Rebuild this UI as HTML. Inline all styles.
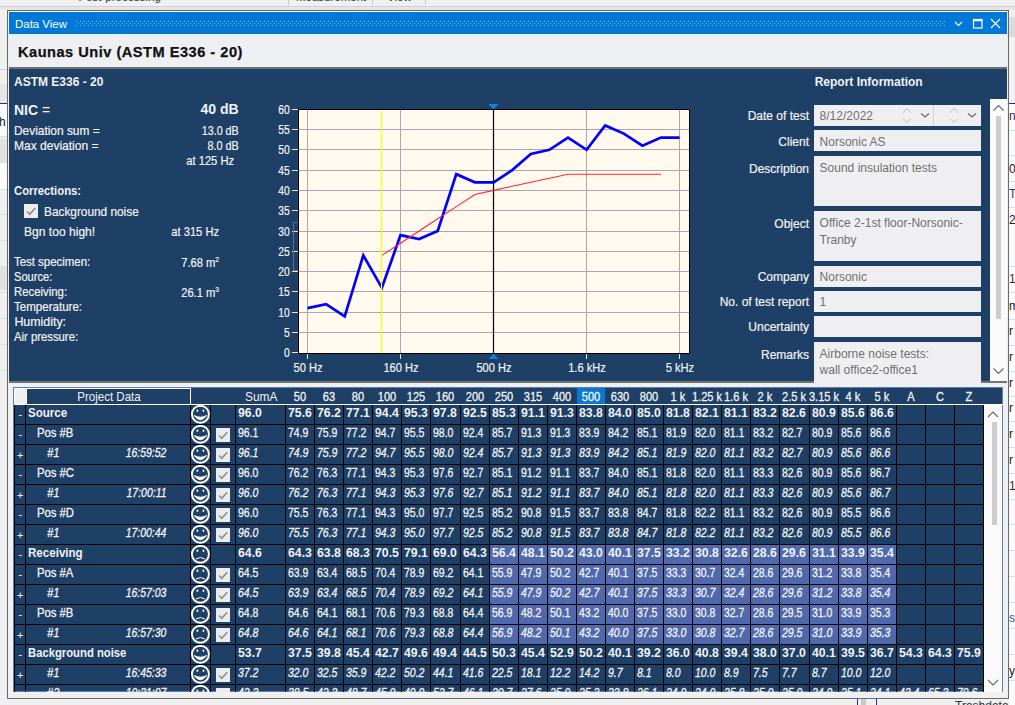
<!DOCTYPE html>
<html><head><meta charset="utf-8"><style>
html,body{margin:0;padding:0;width:1015px;height:705px;overflow:hidden;position:relative;background:#f0f0f0}
.t{position:absolute;font-family:'Liberation Sans',sans-serif;white-space:pre;line-height:1}
</style></head><body>
<div style="position:absolute;left:0px;top:0px;width:1015px;height:705px;background:#f0f0f0;"></div><div class="t" style="left:78.5px;top:-7.69px;font-size:11.5px;font-weight:normal;font-style:normal;color:#333;">Post-processing</div><div class="t" style="left:296px;top:-7.69px;font-size:11.5px;font-weight:normal;font-style:normal;color:#333;">Measurement</div><div class="t" style="left:387px;top:-7.69px;font-size:11.5px;font-weight:normal;font-style:normal;color:#333;">View</div><div style="position:absolute;left:288px;top:0px;width:1px;height:5px;background:#c8c8c8;"></div><div style="position:absolute;left:372px;top:0px;width:1px;height:5px;background:#c8c8c8;"></div><div style="position:absolute;left:425px;top:0px;width:1px;height:5px;background:#c8c8c8;"></div><div style="position:absolute;left:0px;top:6px;width:1015px;height:1px;background:#d2d2d2;"></div><div style="position:absolute;left:0px;top:7px;width:1015px;height:3px;background:#e6e6e6;"></div><div style="position:absolute;left:0px;top:69px;width:7px;height:1px;background:#d0d0d0;"></div><div style="position:absolute;left:0px;top:84px;width:7px;height:19px;background:#e6e6e6;"></div><div style="position:absolute;left:0px;top:103px;width:7px;height:1px;background:#2a2aa0;"></div><div style="position:absolute;left:0px;top:104px;width:7px;height:33px;background:#fbfbfb;"></div><div class="t" style="left:-1px;top:115.68px;font-size:12px;font-weight:normal;font-style:normal;color:#222;">h</div><div style="position:absolute;left:0px;top:136px;width:7px;height:1px;background:#cfe3f3;"></div><div style="position:absolute;left:0px;top:139px;width:7px;height:23px;background:#e2e2e2;"></div><div style="position:absolute;left:0px;top:162px;width:7px;height:1px;background:#cfe3f3;"></div><div style="position:absolute;left:0px;top:189px;width:7px;height:1px;background:#cfe3f3;"></div><div style="position:absolute;left:0px;top:214px;width:7px;height:1px;background:#cfe3f3;"></div><div style="position:absolute;left:0px;top:240px;width:7px;height:1px;background:#cfe3f3;"></div><div style="position:absolute;left:0px;top:266px;width:7px;height:1px;background:#cfe3f3;"></div><div style="position:absolute;left:0px;top:292px;width:7px;height:1px;background:#cfe3f3;"></div><div style="position:absolute;left:0px;top:318px;width:7px;height:1px;background:#cfe3f3;"></div><div style="position:absolute;left:0px;top:344px;width:7px;height:1px;background:#cfe3f3;"></div><div style="position:absolute;left:0px;top:370px;width:7px;height:1px;background:#cfe3f3;"></div><div style="position:absolute;left:0px;top:163px;width:7px;height:26px;background:#fbfbfb;"></div><div style="position:absolute;left:0px;top:267px;width:7px;height:23px;background:#e2e2e2;"></div><div style="position:absolute;left:1009px;top:17px;width:6px;height:20px;background:#dcdcdc;"></div><div style="position:absolute;left:1009px;top:37px;width:6px;height:66px;background:#f2f2f2;"></div><div style="position:absolute;left:1009px;top:103px;width:6px;height:1px;background:#2a2aa0;"></div><div style="position:absolute;left:1009px;top:104px;width:6px;height:601px;background:#fbfbfb;"></div><div style="position:absolute;left:1009px;top:130px;width:6px;height:1px;background:#cfe3f3;"></div><div style="position:absolute;left:1009px;top:155px;width:6px;height:1px;background:#cfe3f3;"></div><div style="position:absolute;left:1009px;top:181px;width:6px;height:1px;background:#cfe3f3;"></div><div style="position:absolute;left:1009px;top:207px;width:6px;height:1px;background:#cfe3f3;"></div><div style="position:absolute;left:1009px;top:266px;width:6px;height:1px;background:#cfe3f3;"></div><div style="position:absolute;left:1009px;top:292px;width:6px;height:1px;background:#cfe3f3;"></div><div style="position:absolute;left:1009px;top:319px;width:6px;height:1px;background:#cfe3f3;"></div><div style="position:absolute;left:1009px;top:345px;width:6px;height:1px;background:#cfe3f3;"></div><div style="position:absolute;left:1009px;top:371px;width:6px;height:1px;background:#cfe3f3;"></div><div style="position:absolute;left:1009px;top:396px;width:6px;height:1px;background:#cfe3f3;"></div><div style="position:absolute;left:1009px;top:421px;width:6px;height:1px;background:#cfe3f3;"></div><div style="position:absolute;left:1009px;top:447px;width:6px;height:1px;background:#cfe3f3;"></div><div style="position:absolute;left:1009px;top:473px;width:6px;height:1px;background:#cfe3f3;"></div><div style="position:absolute;left:1009px;top:499px;width:6px;height:1px;background:#cfe3f3;"></div><div style="position:absolute;left:1009px;top:524px;width:6px;height:1px;background:#cfe3f3;"></div><div style="position:absolute;left:1009px;top:550px;width:6px;height:1px;background:#cfe3f3;"></div><div style="position:absolute;left:1009px;top:576px;width:6px;height:1px;background:#cfe3f3;"></div><div style="position:absolute;left:1009px;top:602px;width:6px;height:1px;background:#cfe3f3;"></div><div style="position:absolute;left:1009px;top:628px;width:6px;height:1px;background:#cfe3f3;"></div><div style="position:absolute;left:1009px;top:654px;width:6px;height:1px;background:#cfe3f3;"></div><div style="position:absolute;left:1009px;top:680px;width:6px;height:1px;background:#cfe3f3;"></div><div class="t" style="left:1009px;top:109.68px;font-size:12px;font-weight:normal;font-style:normal;color:#3a2a4a;">ne</div><div class="t" style="left:1009px;top:162.68px;font-size:12px;font-weight:normal;font-style:normal;color:#222;">02</div><div class="t" style="left:1009px;top:187.68px;font-size:12px;font-weight:normal;font-style:normal;color:#1a3a8a;">T1</div><div class="t" style="left:1009px;top:213.68px;font-size:12px;font-weight:normal;font-style:normal;color:#222;">2</div><div class="t" style="left:1009px;top:272.68px;font-size:12px;font-weight:normal;font-style:normal;color:#3a2a4a;">19</div><div class="t" style="left:1009px;top:299.68px;font-size:12px;font-weight:normal;font-style:normal;color:#222;">m</div><div class="t" style="left:1009px;top:324.68px;font-size:12px;font-weight:normal;font-style:normal;color:#222;">r</div><div class="t" style="left:1009px;top:350.68px;font-size:12px;font-weight:normal;font-style:normal;color:#222;">r</div><div class="t" style="left:1009px;top:376.68px;font-size:12px;font-weight:normal;font-style:normal;color:#222;">r</div><div class="t" style="left:1009px;top:401.68px;font-size:12px;font-weight:normal;font-style:normal;color:#222;">r</div><div class="t" style="left:1009px;top:427.68px;font-size:12px;font-weight:normal;font-style:normal;color:#222;">r</div><div class="t" style="left:1009px;top:453.68px;font-size:12px;font-weight:normal;font-style:normal;color:#222;">r</div><div class="t" style="left:1009px;top:479.68px;font-size:12px;font-weight:normal;font-style:normal;color:#3a2a4a;">19</div><div class="t" style="left:1009px;top:611.68px;font-size:12px;font-weight:normal;font-style:normal;color:#1a5ab0;">s</div><div class="t" style="left:1009px;top:664.68px;font-size:12px;font-weight:normal;font-style:normal;color:#222;">y</div><div style="position:absolute;left:857px;top:698px;width:1px;height:7px;background:#2a2aa0;"></div><div style="position:absolute;left:861px;top:698px;width:5px;height:7px;background:#c8c8c8;"></div><div style="position:absolute;left:876px;top:698px;width:1px;height:7px;background:#2a2aa0;"></div><div class="t" style="left:955px;top:699.68px;font-size:12px;font-weight:normal;font-style:normal;color:#333;">Trashdata</div><div style="position:absolute;left:7px;top:10px;width:1002px;height:689px;background:#f0f0f0;box-sizing:border-box;border:1px solid #6a6a6a;"></div><div style="position:absolute;left:8px;top:11px;width:1000px;height:1px;background:#ffffff;"></div><div style="position:absolute;left:9px;top:12px;width:998px;height:22px;background:#0078d7;"></div><div class="t" style="left:15px;top:18.95px;font-size:11.8px;font-weight:normal;font-style:normal;color:#ffffff;transform:scaleX(0.97);transform-origin:left;">Data View</div><svg style="position:absolute;left:76px;top:20px" width="870" height="7"><defs><pattern id="dp" width="4" height="4" patternUnits="userSpaceOnUse"><rect x="0" y="1" width="1" height="1" fill="#7cbcf0"/><rect x="2" y="3" width="1" height="1" fill="#7cbcf0"/></pattern></defs><rect width="870" height="6" fill="url(#dp)"/></svg><svg style="position:absolute;left:950px;top:14px" width="58" height="18" fill="none" stroke="#fff" stroke-width="1.2"><path d="M5 8 L8.5 11.5 L12 8"/><rect x="23.5" y="5.5" width="8.5" height="8.5"/><line x1="23" y1="6.5" x2="32.5" y2="6.5" stroke-width="1.5"/><path d="M41 5 L50 14 M50 5 L41 14"/></svg><div style="position:absolute;left:9px;top:34px;width:998px;height:33px;background:#eeeff2;"></div><div class="t" style="left:18px;top:44.84px;font-size:14.6px;font-weight:bold;font-style:normal;color:#111;letter-spacing:0.5px;-webkit-text-stroke:0.25px #111">Kaunas Univ (ASTM E336 - 20)</div><div style="position:absolute;left:9px;top:67px;width:998px;height:2px;background:#6d6d6d;"></div><div style="position:absolute;left:9px;top:69px;width:998px;height:312px;background:#1e3f66;"></div><div style="position:absolute;left:9px;top:381px;width:998px;height:2px;background:#6f7474;"></div><div class="t" style="left:14px;top:76.08px;font-size:12px;font-weight:bold;font-style:normal;color:#f2f2f2;">ASTM E336 - 20</div><div class="t" style="left:14px;top:103.16px;font-size:14px;font-weight:bold;font-style:normal;color:#f2f2f2;">NIC <span style="font-weight:normal">=</span></div><div class="t" style="right:776.4px;top:102.36px;font-size:14px;font-weight:bold;font-style:normal;color:#f2f2f2;">40 dB</div><div class="t" style="left:14.3px;top:125.04px;font-size:12.4px;font-weight:normal;font-style:normal;color:#f2f2f2;-webkit-text-stroke:0.2px #f2f2f2;transform:scaleX(0.96);transform-origin:left;">Deviation sum =</div><div class="t" style="right:776.2px;top:125.04px;font-size:12.4px;font-weight:normal;font-style:normal;color:#f2f2f2;-webkit-text-stroke:0.2px #f2f2f2;transform:scaleX(0.865);transform-origin:right;">13.0 dB</div><div class="t" style="left:14.3px;top:140.14px;font-size:12.4px;font-weight:normal;font-style:normal;color:#f2f2f2;-webkit-text-stroke:0.2px #f2f2f2;transform:scaleX(0.97);transform-origin:left;">Max deviation =</div><div class="t" style="right:776.2px;top:140.14px;font-size:12.4px;font-weight:normal;font-style:normal;color:#f2f2f2;-webkit-text-stroke:0.2px #f2f2f2;transform:scaleX(0.875);transform-origin:right;">8.0 dB</div><div class="t" style="right:780.7px;top:155.04px;font-size:12.4px;font-weight:normal;font-style:normal;color:#f2f2f2;-webkit-text-stroke:0.2px #f2f2f2;transform:scaleX(0.9);transform-origin:right;">at 125 Hz</div><div class="t" style="left:14.4px;top:185.48px;font-size:12px;font-weight:bold;font-style:normal;color:#f2f2f2;transform:scaleX(0.94);transform-origin:left;">Corrections:</div><div style="position:absolute;left:24px;top:204px;width:14px;height:14px;background:#ededed;"></div><svg style="position:absolute;left:24px;top:204px" width="14" height="14"><path d="M3 7.5 L5.8 10.3 L11.2 4" fill="none" stroke="#8a8a8a" stroke-width="1.6"/></svg><div class="t" style="left:44.4px;top:206.34px;font-size:12.4px;font-weight:normal;font-style:normal;color:#f2f2f2;-webkit-text-stroke:0.2px #f2f2f2;transform:scaleX(0.955);transform-origin:left;">Background noise</div><div class="t" style="left:24.3px;top:226.14px;font-size:12.4px;font-weight:normal;font-style:normal;color:#f2f2f2;-webkit-text-stroke:0.2px #f2f2f2;transform:scaleX(0.975);transform-origin:left;">Bgn too high!</div><div class="t" style="right:796px;top:226.14px;font-size:12.4px;font-weight:normal;font-style:normal;color:#f2f2f2;-webkit-text-stroke:0.2px #f2f2f2;transform:scaleX(0.9);transform-origin:right;">at 315 Hz</div><div class="t" style="left:14.4px;top:256.14px;font-size:12.4px;font-weight:normal;font-style:normal;color:#f2f2f2;-webkit-text-stroke:0.2px #f2f2f2;transform:scaleX(0.922);transform-origin:left;">Test specimen:</div><div class="t" style="right:796px;top:256.14px;font-size:12.4px;font-weight:normal;font-style:normal;color:#f2f2f2;-webkit-text-stroke:0.2px #f2f2f2;transform:scaleX(0.9);transform-origin:right;">7.68 m<sup style="font-size:7.5px;vertical-align:5px">2</sup></div><div class="t" style="left:14.4px;top:271.14px;font-size:12.4px;font-weight:normal;font-style:normal;color:#f2f2f2;-webkit-text-stroke:0.2px #f2f2f2;transform:scaleX(0.895);transform-origin:left;">Source:</div><div class="t" style="left:14.4px;top:286.14px;font-size:12.4px;font-weight:normal;font-style:normal;color:#f2f2f2;-webkit-text-stroke:0.2px #f2f2f2;transform:scaleX(0.918);transform-origin:left;">Receiving:</div><div class="t" style="right:796px;top:286.14px;font-size:12.4px;font-weight:normal;font-style:normal;color:#f2f2f2;-webkit-text-stroke:0.2px #f2f2f2;transform:scaleX(0.9);transform-origin:right;">26.1 m<sup style="font-size:7.5px;vertical-align:5px">3</sup></div><div class="t" style="left:14.4px;top:301.14px;font-size:12.4px;font-weight:normal;font-style:normal;color:#f2f2f2;-webkit-text-stroke:0.2px #f2f2f2;transform:scaleX(0.932);transform-origin:left;">Temperature:</div><div class="t" style="left:14.4px;top:316.14px;font-size:12.4px;font-weight:normal;font-style:normal;color:#f2f2f2;-webkit-text-stroke:0.2px #f2f2f2;">Humidity:</div><div class="t" style="left:14.4px;top:331.14px;font-size:12.4px;font-weight:normal;font-style:normal;color:#f2f2f2;-webkit-text-stroke:0.2px #f2f2f2;transform:scaleX(0.912);transform-origin:left;">Air pressure:</div><svg style="position:absolute;left:0;top:0" width="1015" height="705"><rect x="298" y="109" width="392" height="245" fill="#000"/><rect x="299" y="110" width="390" height="243" fill="#fff9ee"/><line x1="299" y1="332.5" x2="689" y2="332.5" stroke="#a9a6ae" stroke-width="1"/><line x1="299" y1="312.5" x2="689" y2="312.5" stroke="#a9a6ae" stroke-width="1"/><line x1="299" y1="291.5" x2="689" y2="291.5" stroke="#a9a6ae" stroke-width="1"/><line x1="299" y1="271.5" x2="689" y2="271.5" stroke="#a9a6ae" stroke-width="1"/><line x1="299" y1="251.5" x2="689" y2="251.5" stroke="#a9a6ae" stroke-width="1"/><line x1="299" y1="231.5" x2="689" y2="231.5" stroke="#a9a6ae" stroke-width="1"/><line x1="299" y1="210.5" x2="689" y2="210.5" stroke="#a9a6ae" stroke-width="1"/><line x1="299" y1="190.5" x2="689" y2="190.5" stroke="#a9a6ae" stroke-width="1"/><line x1="299" y1="170.5" x2="689" y2="170.5" stroke="#a9a6ae" stroke-width="1"/><line x1="299" y1="149.5" x2="689" y2="149.5" stroke="#a9a6ae" stroke-width="1"/><line x1="299" y1="129.5" x2="689" y2="129.5" stroke="#a9a6ae" stroke-width="1"/><line x1="307.5" y1="110" x2="307.5" y2="353" stroke="#a9a6ae" stroke-width="1"/><line x1="400.5" y1="110" x2="400.5" y2="353" stroke="#a9a6ae" stroke-width="1"/><line x1="586.5" y1="110" x2="586.5" y2="353" stroke="#a9a6ae" stroke-width="1"/><line x1="679.5" y1="110" x2="679.5" y2="353" stroke="#a9a6ae" stroke-width="1"/><line x1="292" y1="352.5" x2="298" y2="352.5" stroke="#e8e8e8" stroke-width="1"/><line x1="292" y1="332.5" x2="298" y2="332.5" stroke="#e8e8e8" stroke-width="1"/><line x1="292" y1="312.5" x2="298" y2="312.5" stroke="#e8e8e8" stroke-width="1"/><line x1="292" y1="291.5" x2="298" y2="291.5" stroke="#e8e8e8" stroke-width="1"/><line x1="292" y1="271.5" x2="298" y2="271.5" stroke="#e8e8e8" stroke-width="1"/><line x1="292" y1="251.5" x2="298" y2="251.5" stroke="#e8e8e8" stroke-width="1"/><line x1="292" y1="231.5" x2="298" y2="231.5" stroke="#e8e8e8" stroke-width="1"/><line x1="292" y1="210.5" x2="298" y2="210.5" stroke="#e8e8e8" stroke-width="1"/><line x1="292" y1="190.5" x2="298" y2="190.5" stroke="#e8e8e8" stroke-width="1"/><line x1="292" y1="170.5" x2="298" y2="170.5" stroke="#e8e8e8" stroke-width="1"/><line x1="292" y1="149.5" x2="298" y2="149.5" stroke="#e8e8e8" stroke-width="1"/><line x1="292" y1="129.5" x2="298" y2="129.5" stroke="#e8e8e8" stroke-width="1"/><line x1="292" y1="109.5" x2="298" y2="109.5" stroke="#e8e8e8" stroke-width="1"/><line x1="307.5" y1="354" x2="307.5" y2="359" stroke="#e8e8e8" stroke-width="1"/><line x1="400.5" y1="354" x2="400.5" y2="359" stroke="#e8e8e8" stroke-width="1"/><line x1="493.5" y1="354" x2="493.5" y2="359" stroke="#e8e8e8" stroke-width="1"/><line x1="586.5" y1="354" x2="586.5" y2="359" stroke="#e8e8e8" stroke-width="1"/><line x1="679.5" y1="354" x2="679.5" y2="359" stroke="#e8e8e8" stroke-width="1"/><polyline fill="none" stroke="#0000ff" stroke-width="2.7" stroke-linejoin="miter" points="307.5,308.1 326.1,304.1 344.7,316.3 363.3,255.4 381.9,287.8 400.5,235.1 419.1,239.1 437.7,231.0 456.3,174.2 474.9,182.3 493.6,182.3 512.2,170.1 530.8,153.9 549.4,149.8 568.0,137.6 586.6,149.8 605.2,125.4 623.8,133.6 642.4,145.7 661.0,137.6 679.6,137.6"/><polyline fill="none" stroke="#ff2a2a" stroke-width="1.1" points="381.9,255.4 400.5,243.2 419.1,231.0 437.7,218.8 456.3,206.6 474.9,194.5 493.6,190.4 512.2,186.3 530.8,182.3 549.4,178.2 568.0,174.2 586.6,174.2 605.2,174.2 623.8,174.2 642.4,174.2 661.0,174.2"/><line x1="381.5" y1="110" x2="381.5" y2="353" stroke="#ffff00" stroke-width="1.2"/><line x1="493.5" y1="110" x2="493.5" y2="353" stroke="#000" stroke-width="1.2"/><path d="M488.5 104 L498.5 104 L493.5 109.5 Z" fill="#0a84e0"/><path d="M488.5 359 L498.5 359 L493.5 353.5 Z" fill="#0a84e0"/></svg><div class="t" style="right:725px;top:347.22px;font-size:12.3px;font-weight:normal;font-style:normal;color:#f2f2f2;-webkit-text-stroke:0.2px #f2f2f2;transform:scaleX(0.84);transform-origin:right;">0</div><div class="t" style="right:725px;top:327.22px;font-size:12.3px;font-weight:normal;font-style:normal;color:#f2f2f2;-webkit-text-stroke:0.2px #f2f2f2;transform:scaleX(0.84);transform-origin:right;">5</div><div class="t" style="right:725px;top:307.22px;font-size:12.3px;font-weight:normal;font-style:normal;color:#f2f2f2;-webkit-text-stroke:0.2px #f2f2f2;transform:scaleX(0.84);transform-origin:right;">10</div><div class="t" style="right:725px;top:286.22px;font-size:12.3px;font-weight:normal;font-style:normal;color:#f2f2f2;-webkit-text-stroke:0.2px #f2f2f2;transform:scaleX(0.84);transform-origin:right;">15</div><div class="t" style="right:725px;top:266.22px;font-size:12.3px;font-weight:normal;font-style:normal;color:#f2f2f2;-webkit-text-stroke:0.2px #f2f2f2;transform:scaleX(0.84);transform-origin:right;">20</div><div class="t" style="right:725px;top:246.22px;font-size:12.3px;font-weight:normal;font-style:normal;color:#f2f2f2;-webkit-text-stroke:0.2px #f2f2f2;transform:scaleX(0.84);transform-origin:right;">25</div><div class="t" style="right:725px;top:226.22px;font-size:12.3px;font-weight:normal;font-style:normal;color:#f2f2f2;-webkit-text-stroke:0.2px #f2f2f2;transform:scaleX(0.84);transform-origin:right;">30</div><div class="t" style="right:725px;top:205.22px;font-size:12.3px;font-weight:normal;font-style:normal;color:#f2f2f2;-webkit-text-stroke:0.2px #f2f2f2;transform:scaleX(0.84);transform-origin:right;">35</div><div class="t" style="right:725px;top:185.22px;font-size:12.3px;font-weight:normal;font-style:normal;color:#f2f2f2;-webkit-text-stroke:0.2px #f2f2f2;transform:scaleX(0.84);transform-origin:right;">40</div><div class="t" style="right:725px;top:165.22px;font-size:12.3px;font-weight:normal;font-style:normal;color:#f2f2f2;-webkit-text-stroke:0.2px #f2f2f2;transform:scaleX(0.84);transform-origin:right;">45</div><div class="t" style="right:725px;top:144.22px;font-size:12.3px;font-weight:normal;font-style:normal;color:#f2f2f2;-webkit-text-stroke:0.2px #f2f2f2;transform:scaleX(0.84);transform-origin:right;">50</div><div class="t" style="right:725px;top:124.22px;font-size:12.3px;font-weight:normal;font-style:normal;color:#f2f2f2;-webkit-text-stroke:0.2px #f2f2f2;transform:scaleX(0.84);transform-origin:right;">55</div><div class="t" style="right:725px;top:104.22px;font-size:12.3px;font-weight:normal;font-style:normal;color:#f2f2f2;-webkit-text-stroke:0.2px #f2f2f2;transform:scaleX(0.84);transform-origin:right;">60</div><div class="t" style="left:107.5px;width:400px;text-align:center;top:361.94px;font-size:12.4px;font-weight:normal;font-style:normal;color:#f2f2f2;-webkit-text-stroke:0.2px #f2f2f2;transform:scaleX(0.895);transform-origin:center;">50 Hz</div><div class="t" style="left:200.52499999999998px;width:400px;text-align:center;top:361.94px;font-size:12.4px;font-weight:normal;font-style:normal;color:#f2f2f2;-webkit-text-stroke:0.2px #f2f2f2;transform:scaleX(0.895);transform-origin:center;">160 Hz</div><div class="t" style="left:293.55px;width:400px;text-align:center;top:361.94px;font-size:12.4px;font-weight:normal;font-style:normal;color:#f2f2f2;-webkit-text-stroke:0.2px #f2f2f2;transform:scaleX(0.895);transform-origin:center;">500 Hz</div><div class="t" style="left:386.57500000000005px;width:400px;text-align:center;top:361.94px;font-size:12.4px;font-weight:normal;font-style:normal;color:#f2f2f2;-webkit-text-stroke:0.2px #f2f2f2;transform:scaleX(0.895);transform-origin:center;">1.6 kHz</div><div class="t" style="left:479.6px;width:400px;text-align:center;top:361.94px;font-size:12.4px;font-weight:normal;font-style:normal;color:#f2f2f2;-webkit-text-stroke:0.2px #f2f2f2;transform:scaleX(0.895);transform-origin:center;">5 kHz</div><div style="position:absolute;left:293px;top:222px;width:5px;height:49px;background:transparent;box-sizing:border-box;border:1px solid #56708f;border-right:none"></div><div class="t" style="left:814.7px;top:76.08px;font-size:12px;font-weight:bold;font-style:normal;color:#f2f2f2;">Report Information</div><div class="t" style="right:206px;top:110.38px;font-size:12px;font-weight:normal;font-style:normal;color:#f2f2f2;-webkit-text-stroke:0.2px #f2f2f2;">Date of test</div><div style="position:absolute;left:814px;top:105px;width:167px;height:21px;background:#efeff2;"></div><div class="t" style="right:206px;top:135.58px;font-size:12px;font-weight:normal;font-style:normal;color:#f2f2f2;-webkit-text-stroke:0.2px #f2f2f2;">Client</div><div style="position:absolute;left:814px;top:130px;width:167px;height:21px;background:#efeff2;"></div><div class="t" style="right:206px;top:163.48px;font-size:12px;font-weight:normal;font-style:normal;color:#f2f2f2;-webkit-text-stroke:0.2px #f2f2f2;">Description</div><div style="position:absolute;left:814px;top:156px;width:167px;height:50px;background:#efeff2;"></div><div class="t" style="right:206px;top:218.18px;font-size:12px;font-weight:normal;font-style:normal;color:#f2f2f2;-webkit-text-stroke:0.2px #f2f2f2;">Object</div><div style="position:absolute;left:814px;top:211px;width:167px;height:50px;background:#efeff2;"></div><div class="t" style="right:206px;top:271.28px;font-size:12px;font-weight:normal;font-style:normal;color:#f2f2f2;-webkit-text-stroke:0.2px #f2f2f2;">Company</div><div style="position:absolute;left:814px;top:266px;width:167px;height:21px;background:#efeff2;"></div><div class="t" style="right:206px;top:296.28px;font-size:12px;font-weight:normal;font-style:normal;color:#f2f2f2;-webkit-text-stroke:0.2px #f2f2f2;">No. of test report</div><div style="position:absolute;left:814px;top:291px;width:167px;height:21px;background:#efeff2;"></div><div class="t" style="right:206px;top:321.18px;font-size:12px;font-weight:normal;font-style:normal;color:#f2f2f2;-webkit-text-stroke:0.2px #f2f2f2;">Uncertainty</div><div style="position:absolute;left:814px;top:316px;width:167px;height:21px;background:#efeff2;"></div><div class="t" style="right:206px;top:349.38px;font-size:12px;font-weight:normal;font-style:normal;color:#f2f2f2;-webkit-text-stroke:0.2px #f2f2f2;">Remarks</div><div style="position:absolute;left:814px;top:342px;width:167px;height:50px;background:#efeff2;"></div><div class="t" style="left:819.6px;top:110.38px;font-size:12px;font-weight:normal;font-style:normal;color:#707070;">8/12/2022</div><div style="position:absolute;left:933px;top:105px;width:1px;height:21px;background:#cfcfd4;"></div><svg style="position:absolute;left:814px;top:105px" width="167" height="21" fill="none" stroke="#b9b9bd" stroke-width="1"><path d="M89 7.5 L93 3.5 L97 7.5 M89 13.5 L93 17.5 L97 13.5"/><path d="M136 7.5 L140 3.5 L144 7.5 M136 13.5 L140 17.5 L144 13.5"/><path d="M107 8.5 L111 12 L115 8.5 M154 8.5 L158 12 L162 8.5" stroke="#6a6a6a" stroke-width="1.3"/></svg><div class="t" style="left:819.6px;top:135.58px;font-size:12px;font-weight:normal;font-style:normal;color:#707070;">Norsonic AS</div><div class="t" style="left:819.6px;top:162.48px;font-size:12px;font-weight:normal;font-style:normal;color:#707070;">Sound insulation tests</div><div class="t" style="left:819.6px;top:217.48px;font-size:12px;font-weight:normal;font-style:normal;color:#707070;">Office 2-1st floor-Norsonic-</div><div class="t" style="left:819.6px;top:233.68px;font-size:12px;font-weight:normal;font-style:normal;color:#707070;">Tranby</div><div class="t" style="left:819.6px;top:271.28px;font-size:12px;font-weight:normal;font-style:normal;color:#707070;">Norsonic</div><div class="t" style="left:819.6px;top:296.28px;font-size:12px;font-weight:normal;font-style:normal;color:#707070;">1</div><div class="t" style="left:819.6px;top:348.18px;font-size:12px;font-weight:normal;font-style:normal;color:#707070;">Airborne noise tests:</div><div class="t" style="left:819.6px;top:364.38px;font-size:12px;font-weight:normal;font-style:normal;color:#707070;">wall office2-office1</div><div style="position:absolute;left:990px;top:99px;width:17px;height:282px;background:#fafafa;"></div><div style="position:absolute;left:996px;top:116px;width:5px;height:203px;background:#cdcdcd;"></div><svg style="position:absolute;left:990px;top:99px" width="17" height="282" fill="none" stroke="#6a6a6a" stroke-width="1.2"><path d="M3.5 11.5 L8.5 6.5 L13.5 11.5"/><path d="M3.5 269.5 L8.5 274.5 L13.5 269.5"/></svg>
<div style="position:absolute;left:13px;top:387px;width:990px;height:305px;overflow:hidden;background:#1e3f66;box-shadow:inset 0 0 0 1px #5b7fae"><div style="position:absolute;left:1.00px;top:1.00px;width:13.00px;height:17.00px;background:#ffffff;"></div><div style="position:absolute;left:2.00px;top:2.00px;width:11.00px;height:15.00px;background:#efefef;"></div><div style="position:absolute;left:13.00px;top:1.00px;width:165.00px;height:17.00px;background:#1e3f66;box-sizing:border-box;border:1px solid #ffffff;"></div><div class="t" style="left:-4.00px;width:200px;text-align:center;top:4.67px;font-size:11.9px;font-weight:normal;font-style:normal;color:#f2f2f2;transform:scaleX(0.97);transform-origin:center;">Project Data</div><div style="position:absolute;left:564.00px;top:1.00px;width:28.00px;height:16.00px;background:#0b78d0;"></div><div class="t" style="right:725.80px;top:3.82px;font-size:12.3px;font-weight:normal;font-style:normal;color:#f2f2f2;transform:scaleX(0.97);transform-origin:right;">SumA</div><div class="t" style="left:186.50px;width:200px;text-align:center;top:3.82px;font-size:12.3px;font-weight:normal;font-style:normal;color:#f2f2f2;transform:scaleX(0.9);transform-origin:center;-webkit-text-stroke:0.3px #f2f2f2;">50</div><div class="t" style="left:215.50px;width:200px;text-align:center;top:3.82px;font-size:12.3px;font-weight:normal;font-style:normal;color:#f2f2f2;transform:scaleX(0.9);transform-origin:center;-webkit-text-stroke:0.3px #f2f2f2;">63</div><div class="t" style="left:244.50px;width:200px;text-align:center;top:3.82px;font-size:12.3px;font-weight:normal;font-style:normal;color:#f2f2f2;transform:scaleX(0.9);transform-origin:center;-webkit-text-stroke:0.3px #f2f2f2;">80</div><div class="t" style="left:273.50px;width:200px;text-align:center;top:3.82px;font-size:12.3px;font-weight:normal;font-style:normal;color:#f2f2f2;transform:scaleX(0.9);transform-origin:center;-webkit-text-stroke:0.3px #f2f2f2;">100</div><div class="t" style="left:302.50px;width:200px;text-align:center;top:3.82px;font-size:12.3px;font-weight:normal;font-style:normal;color:#f2f2f2;transform:scaleX(0.9);transform-origin:center;-webkit-text-stroke:0.3px #f2f2f2;">125</div><div class="t" style="left:332.00px;width:200px;text-align:center;top:3.82px;font-size:12.3px;font-weight:normal;font-style:normal;color:#f2f2f2;transform:scaleX(0.9);transform-origin:center;-webkit-text-stroke:0.3px #f2f2f2;">160</div><div class="t" style="left:361.50px;width:200px;text-align:center;top:3.82px;font-size:12.3px;font-weight:normal;font-style:normal;color:#f2f2f2;transform:scaleX(0.9);transform-origin:center;-webkit-text-stroke:0.3px #f2f2f2;">200</div><div class="t" style="left:390.50px;width:200px;text-align:center;top:3.82px;font-size:12.3px;font-weight:normal;font-style:normal;color:#f2f2f2;transform:scaleX(0.9);transform-origin:center;-webkit-text-stroke:0.3px #f2f2f2;">250</div><div class="t" style="left:419.50px;width:200px;text-align:center;top:3.82px;font-size:12.3px;font-weight:normal;font-style:normal;color:#f2f2f2;transform:scaleX(0.9);transform-origin:center;-webkit-text-stroke:0.3px #f2f2f2;">315</div><div class="t" style="left:448.50px;width:200px;text-align:center;top:3.82px;font-size:12.3px;font-weight:normal;font-style:normal;color:#f2f2f2;transform:scaleX(0.9);transform-origin:center;-webkit-text-stroke:0.3px #f2f2f2;">400</div><div class="t" style="left:477.50px;width:200px;text-align:center;top:3.82px;font-size:12.3px;font-weight:normal;font-style:normal;color:#f2f2f2;transform:scaleX(0.9);transform-origin:center;-webkit-text-stroke:0.3px #f2f2f2;">500</div><div class="t" style="left:506.50px;width:200px;text-align:center;top:3.82px;font-size:12.3px;font-weight:normal;font-style:normal;color:#f2f2f2;transform:scaleX(0.9);transform-origin:center;-webkit-text-stroke:0.3px #f2f2f2;">630</div><div class="t" style="left:535.50px;width:200px;text-align:center;top:3.82px;font-size:12.3px;font-weight:normal;font-style:normal;color:#f2f2f2;transform:scaleX(0.9);transform-origin:center;-webkit-text-stroke:0.3px #f2f2f2;">800</div><div class="t" style="left:564.50px;width:200px;text-align:center;top:3.82px;font-size:12.3px;font-weight:normal;font-style:normal;color:#f2f2f2;transform:scaleX(0.9);transform-origin:center;-webkit-text-stroke:0.3px #f2f2f2;">1 k</div><div class="t" style="left:593.50px;width:200px;text-align:center;top:3.82px;font-size:12.3px;font-weight:normal;font-style:normal;color:#f2f2f2;transform:scaleX(0.9);transform-origin:center;-webkit-text-stroke:0.3px #f2f2f2;">1.25 k</div><div class="t" style="left:622.50px;width:200px;text-align:center;top:3.82px;font-size:12.3px;font-weight:normal;font-style:normal;color:#f2f2f2;transform:scaleX(0.9);transform-origin:center;-webkit-text-stroke:0.3px #f2f2f2;">1.6 k</div><div class="t" style="left:651.50px;width:200px;text-align:center;top:3.82px;font-size:12.3px;font-weight:normal;font-style:normal;color:#f2f2f2;transform:scaleX(0.9);transform-origin:center;-webkit-text-stroke:0.3px #f2f2f2;">2 k</div><div class="t" style="left:681.00px;width:200px;text-align:center;top:3.82px;font-size:12.3px;font-weight:normal;font-style:normal;color:#f2f2f2;transform:scaleX(0.9);transform-origin:center;-webkit-text-stroke:0.3px #f2f2f2;">2.5 k</div><div class="t" style="left:710.50px;width:200px;text-align:center;top:3.82px;font-size:12.3px;font-weight:normal;font-style:normal;color:#f2f2f2;transform:scaleX(0.9);transform-origin:center;-webkit-text-stroke:0.3px #f2f2f2;">3.15 k</div><div class="t" style="left:739.50px;width:200px;text-align:center;top:3.82px;font-size:12.3px;font-weight:normal;font-style:normal;color:#f2f2f2;transform:scaleX(0.9);transform-origin:center;-webkit-text-stroke:0.3px #f2f2f2;">4 k</div><div class="t" style="left:768.50px;width:200px;text-align:center;top:3.82px;font-size:12.3px;font-weight:normal;font-style:normal;color:#f2f2f2;transform:scaleX(0.9);transform-origin:center;-webkit-text-stroke:0.3px #f2f2f2;">5 k</div><div class="t" style="left:797.50px;width:200px;text-align:center;top:3.82px;font-size:12.3px;font-weight:normal;font-style:normal;color:#f2f2f2;transform:scaleX(0.9);transform-origin:center;-webkit-text-stroke:0.3px #f2f2f2;">A</div><div class="t" style="left:826.50px;width:200px;text-align:center;top:3.82px;font-size:12.3px;font-weight:normal;font-style:normal;color:#f2f2f2;transform:scaleX(0.9);transform-origin:center;-webkit-text-stroke:0.3px #f2f2f2;">C</div><div class="t" style="left:855.50px;width:200px;text-align:center;top:3.82px;font-size:12.3px;font-weight:normal;font-style:normal;color:#f2f2f2;transform:scaleX(0.9);transform-origin:center;-webkit-text-stroke:0.3px #f2f2f2;">Z</div><div style="position:absolute;left:1.00px;top:17.00px;width:989.00px;height:1.00px;background:#ffffff;"></div><div style="position:absolute;left:476.00px;top:157.00px;width:29.00px;height:20.00px;background:#5068ac;"></div><div style="position:absolute;left:505.00px;top:157.00px;width:29.00px;height:20.00px;background:#5068ac;"></div><div style="position:absolute;left:534.00px;top:157.00px;width:29.00px;height:20.00px;background:#5068ac;"></div><div style="position:absolute;left:563.00px;top:157.00px;width:29.00px;height:20.00px;background:#5068ac;"></div><div style="position:absolute;left:592.00px;top:157.00px;width:29.00px;height:20.00px;background:#5068ac;"></div><div style="position:absolute;left:621.00px;top:157.00px;width:29.00px;height:20.00px;background:#5068ac;"></div><div style="position:absolute;left:650.00px;top:157.00px;width:29.00px;height:20.00px;background:#5068ac;"></div><div style="position:absolute;left:679.00px;top:157.00px;width:29.00px;height:20.00px;background:#5068ac;"></div><div style="position:absolute;left:708.00px;top:157.00px;width:29.00px;height:20.00px;background:#5068ac;"></div><div style="position:absolute;left:737.00px;top:157.00px;width:29.00px;height:20.00px;background:#5068ac;"></div><div style="position:absolute;left:766.00px;top:157.00px;width:30.00px;height:20.00px;background:#5068ac;"></div><div style="position:absolute;left:796.00px;top:157.00px;width:29.00px;height:20.00px;background:#5068ac;"></div><div style="position:absolute;left:825.00px;top:157.00px;width:29.00px;height:20.00px;background:#5068ac;"></div><div style="position:absolute;left:854.00px;top:157.00px;width:29.00px;height:20.00px;background:#5068ac;"></div><div style="position:absolute;left:476.00px;top:177.00px;width:29.00px;height:20.00px;background:#5068ac;"></div><div style="position:absolute;left:505.00px;top:177.00px;width:29.00px;height:20.00px;background:#5068ac;"></div><div style="position:absolute;left:534.00px;top:177.00px;width:29.00px;height:20.00px;background:#5068ac;"></div><div style="position:absolute;left:563.00px;top:177.00px;width:29.00px;height:20.00px;background:#5068ac;"></div><div style="position:absolute;left:592.00px;top:177.00px;width:29.00px;height:20.00px;background:#5068ac;"></div><div style="position:absolute;left:621.00px;top:177.00px;width:29.00px;height:20.00px;background:#5068ac;"></div><div style="position:absolute;left:650.00px;top:177.00px;width:29.00px;height:20.00px;background:#5068ac;"></div><div style="position:absolute;left:679.00px;top:177.00px;width:29.00px;height:20.00px;background:#5068ac;"></div><div style="position:absolute;left:708.00px;top:177.00px;width:29.00px;height:20.00px;background:#5068ac;"></div><div style="position:absolute;left:737.00px;top:177.00px;width:29.00px;height:20.00px;background:#5068ac;"></div><div style="position:absolute;left:766.00px;top:177.00px;width:30.00px;height:20.00px;background:#5068ac;"></div><div style="position:absolute;left:796.00px;top:177.00px;width:29.00px;height:20.00px;background:#5068ac;"></div><div style="position:absolute;left:825.00px;top:177.00px;width:29.00px;height:20.00px;background:#5068ac;"></div><div style="position:absolute;left:854.00px;top:177.00px;width:29.00px;height:20.00px;background:#5068ac;"></div><div style="position:absolute;left:476.00px;top:197.00px;width:29.00px;height:20.00px;background:#5068ac;"></div><div style="position:absolute;left:505.00px;top:197.00px;width:29.00px;height:20.00px;background:#5068ac;"></div><div style="position:absolute;left:534.00px;top:197.00px;width:29.00px;height:20.00px;background:#5068ac;"></div><div style="position:absolute;left:563.00px;top:197.00px;width:29.00px;height:20.00px;background:#5068ac;"></div><div style="position:absolute;left:592.00px;top:197.00px;width:29.00px;height:20.00px;background:#5068ac;"></div><div style="position:absolute;left:621.00px;top:197.00px;width:29.00px;height:20.00px;background:#5068ac;"></div><div style="position:absolute;left:650.00px;top:197.00px;width:29.00px;height:20.00px;background:#5068ac;"></div><div style="position:absolute;left:679.00px;top:197.00px;width:29.00px;height:20.00px;background:#5068ac;"></div><div style="position:absolute;left:708.00px;top:197.00px;width:29.00px;height:20.00px;background:#5068ac;"></div><div style="position:absolute;left:737.00px;top:197.00px;width:29.00px;height:20.00px;background:#5068ac;"></div><div style="position:absolute;left:766.00px;top:197.00px;width:30.00px;height:20.00px;background:#5068ac;"></div><div style="position:absolute;left:796.00px;top:197.00px;width:29.00px;height:20.00px;background:#5068ac;"></div><div style="position:absolute;left:825.00px;top:197.00px;width:29.00px;height:20.00px;background:#5068ac;"></div><div style="position:absolute;left:854.00px;top:197.00px;width:29.00px;height:20.00px;background:#5068ac;"></div><div style="position:absolute;left:476.00px;top:217.00px;width:29.00px;height:20.00px;background:#5068ac;"></div><div style="position:absolute;left:505.00px;top:217.00px;width:29.00px;height:20.00px;background:#5068ac;"></div><div style="position:absolute;left:534.00px;top:217.00px;width:29.00px;height:20.00px;background:#5068ac;"></div><div style="position:absolute;left:563.00px;top:217.00px;width:29.00px;height:20.00px;background:#5068ac;"></div><div style="position:absolute;left:592.00px;top:217.00px;width:29.00px;height:20.00px;background:#5068ac;"></div><div style="position:absolute;left:621.00px;top:217.00px;width:29.00px;height:20.00px;background:#5068ac;"></div><div style="position:absolute;left:650.00px;top:217.00px;width:29.00px;height:20.00px;background:#5068ac;"></div><div style="position:absolute;left:679.00px;top:217.00px;width:29.00px;height:20.00px;background:#5068ac;"></div><div style="position:absolute;left:708.00px;top:217.00px;width:29.00px;height:20.00px;background:#5068ac;"></div><div style="position:absolute;left:737.00px;top:217.00px;width:29.00px;height:20.00px;background:#5068ac;"></div><div style="position:absolute;left:766.00px;top:217.00px;width:30.00px;height:20.00px;background:#5068ac;"></div><div style="position:absolute;left:796.00px;top:217.00px;width:29.00px;height:20.00px;background:#5068ac;"></div><div style="position:absolute;left:825.00px;top:217.00px;width:29.00px;height:20.00px;background:#5068ac;"></div><div style="position:absolute;left:854.00px;top:217.00px;width:29.00px;height:20.00px;background:#5068ac;"></div><div style="position:absolute;left:476.00px;top:237.00px;width:29.00px;height:20.00px;background:#5068ac;"></div><div style="position:absolute;left:505.00px;top:237.00px;width:29.00px;height:20.00px;background:#5068ac;"></div><div style="position:absolute;left:534.00px;top:237.00px;width:29.00px;height:20.00px;background:#5068ac;"></div><div style="position:absolute;left:563.00px;top:237.00px;width:29.00px;height:20.00px;background:#5068ac;"></div><div style="position:absolute;left:592.00px;top:237.00px;width:29.00px;height:20.00px;background:#5068ac;"></div><div style="position:absolute;left:621.00px;top:237.00px;width:29.00px;height:20.00px;background:#5068ac;"></div><div style="position:absolute;left:650.00px;top:237.00px;width:29.00px;height:20.00px;background:#5068ac;"></div><div style="position:absolute;left:679.00px;top:237.00px;width:29.00px;height:20.00px;background:#5068ac;"></div><div style="position:absolute;left:708.00px;top:237.00px;width:29.00px;height:20.00px;background:#5068ac;"></div><div style="position:absolute;left:737.00px;top:237.00px;width:29.00px;height:20.00px;background:#5068ac;"></div><div style="position:absolute;left:766.00px;top:237.00px;width:30.00px;height:20.00px;background:#5068ac;"></div><div style="position:absolute;left:796.00px;top:237.00px;width:29.00px;height:20.00px;background:#5068ac;"></div><div style="position:absolute;left:825.00px;top:237.00px;width:29.00px;height:20.00px;background:#5068ac;"></div><div style="position:absolute;left:854.00px;top:237.00px;width:29.00px;height:20.00px;background:#5068ac;"></div><div class="t" style="left:-92.70px;width:200px;text-align:center;top:21.74px;font-size:11px;font-weight:normal;font-style:normal;color:#f2f2f2;">-</div><div class="t" style="left:14.90px;top:20.31px;font-size:12.2px;font-weight:bold;font-style:normal;color:#f2f2f2;transform:scaleX(0.95);transform-origin:left;">Source</div><div class="t" style="left:224.90px;top:20.05px;font-size:12.5px;font-weight:bold;font-style:normal;color:#f2f2f2;transform:scaleX(0.98);transform-origin:left;">96.0</div><div class="t" style="left:275.10px;top:20.05px;font-size:12.5px;font-weight:bold;font-style:normal;color:#f2f2f2;transform:scaleX(0.98);transform-origin:left;">75.6</div><div class="t" style="left:304.10px;top:20.05px;font-size:12.5px;font-weight:bold;font-style:normal;color:#f2f2f2;transform:scaleX(0.98);transform-origin:left;">76.2</div><div class="t" style="left:333.10px;top:20.05px;font-size:12.5px;font-weight:bold;font-style:normal;color:#f2f2f2;transform:scaleX(0.98);transform-origin:left;">77.1</div><div class="t" style="left:362.10px;top:20.05px;font-size:12.5px;font-weight:bold;font-style:normal;color:#f2f2f2;transform:scaleX(0.98);transform-origin:left;">94.4</div><div class="t" style="left:391.10px;top:20.05px;font-size:12.5px;font-weight:bold;font-style:normal;color:#f2f2f2;transform:scaleX(0.98);transform-origin:left;">95.3</div><div class="t" style="left:420.10px;top:20.05px;font-size:12.5px;font-weight:bold;font-style:normal;color:#f2f2f2;transform:scaleX(0.98);transform-origin:left;">97.8</div><div class="t" style="left:450.10px;top:20.05px;font-size:12.5px;font-weight:bold;font-style:normal;color:#f2f2f2;transform:scaleX(0.98);transform-origin:left;">92.5</div><div class="t" style="left:479.10px;top:20.05px;font-size:12.5px;font-weight:bold;font-style:normal;color:#f2f2f2;transform:scaleX(0.98);transform-origin:left;">85.3</div><div class="t" style="left:508.10px;top:20.05px;font-size:12.5px;font-weight:bold;font-style:normal;color:#f2f2f2;transform:scaleX(0.98);transform-origin:left;">91.1</div><div class="t" style="left:537.10px;top:20.05px;font-size:12.5px;font-weight:bold;font-style:normal;color:#f2f2f2;transform:scaleX(0.98);transform-origin:left;">91.3</div><div class="t" style="left:566.10px;top:20.05px;font-size:12.5px;font-weight:bold;font-style:normal;color:#f2f2f2;transform:scaleX(0.98);transform-origin:left;">83.8</div><div class="t" style="left:595.10px;top:20.05px;font-size:12.5px;font-weight:bold;font-style:normal;color:#f2f2f2;transform:scaleX(0.98);transform-origin:left;">84.0</div><div class="t" style="left:624.10px;top:20.05px;font-size:12.5px;font-weight:bold;font-style:normal;color:#f2f2f2;transform:scaleX(0.98);transform-origin:left;">85.0</div><div class="t" style="left:653.10px;top:20.05px;font-size:12.5px;font-weight:bold;font-style:normal;color:#f2f2f2;transform:scaleX(0.98);transform-origin:left;">81.8</div><div class="t" style="left:682.10px;top:20.05px;font-size:12.5px;font-weight:bold;font-style:normal;color:#f2f2f2;transform:scaleX(0.98);transform-origin:left;">82.1</div><div class="t" style="left:711.10px;top:20.05px;font-size:12.5px;font-weight:bold;font-style:normal;color:#f2f2f2;transform:scaleX(0.98);transform-origin:left;">81.1</div><div class="t" style="left:740.10px;top:20.05px;font-size:12.5px;font-weight:bold;font-style:normal;color:#f2f2f2;transform:scaleX(0.98);transform-origin:left;">83.2</div><div class="t" style="left:769.10px;top:20.05px;font-size:12.5px;font-weight:bold;font-style:normal;color:#f2f2f2;transform:scaleX(0.98);transform-origin:left;">82.6</div><div class="t" style="left:799.10px;top:20.05px;font-size:12.5px;font-weight:bold;font-style:normal;color:#f2f2f2;transform:scaleX(0.98);transform-origin:left;">80.9</div><div class="t" style="left:828.10px;top:20.05px;font-size:12.5px;font-weight:bold;font-style:normal;color:#f2f2f2;transform:scaleX(0.98);transform-origin:left;">85.6</div><div class="t" style="left:857.10px;top:20.05px;font-size:12.5px;font-weight:bold;font-style:normal;color:#f2f2f2;transform:scaleX(0.98);transform-origin:left;">86.6</div><svg style="position:absolute;left:0;top:0;overflow:visible" width="1" height="1"><g transform="translate(-13,-387)"><circle cx="200.4" cy="414.2" r="8.5" fill="none" stroke="#fff" stroke-width="1.9"/><ellipse cx="197.4" cy="410.8" rx="0.9" ry="1.2" fill="#fff"/><ellipse cx="203.4" cy="410.8" rx="0.9" ry="1.2" fill="#fff"/><path d="M194.1 415.5 Q200.4 424.0 206.7 415.5 Q200.4 418.8 194.1 415.5 Z" fill="#fff" stroke="#fff" stroke-width="0.9" stroke-linejoin="round"/></g></svg><div class="t" style="left:-92.70px;width:200px;text-align:center;top:41.74px;font-size:11px;font-weight:normal;font-style:normal;color:#f2f2f2;">-</div><div class="t" style="left:24.40px;top:40.31px;font-size:12.2px;font-weight:normal;font-style:normal;color:#f2f2f2;transform:scaleX(0.925);transform-origin:left;-webkit-text-stroke:0.3px #f2f2f2;">Pos #B</div><div class="t" style="left:224.90px;top:40.05px;font-size:12.5px;font-weight:normal;font-style:normal;color:#f2f2f2;transform:scaleX(0.84);transform-origin:left;-webkit-text-stroke:0.3px #f2f2f2;">96.1</div><div class="t" style="left:275.10px;top:40.05px;font-size:12.5px;font-weight:normal;font-style:normal;color:#f2f2f2;transform:scaleX(0.84);transform-origin:left;-webkit-text-stroke:0.3px #f2f2f2;">74.9</div><div class="t" style="left:304.10px;top:40.05px;font-size:12.5px;font-weight:normal;font-style:normal;color:#f2f2f2;transform:scaleX(0.84);transform-origin:left;-webkit-text-stroke:0.3px #f2f2f2;">75.9</div><div class="t" style="left:333.10px;top:40.05px;font-size:12.5px;font-weight:normal;font-style:normal;color:#f2f2f2;transform:scaleX(0.84);transform-origin:left;-webkit-text-stroke:0.3px #f2f2f2;">77.2</div><div class="t" style="left:362.10px;top:40.05px;font-size:12.5px;font-weight:normal;font-style:normal;color:#f2f2f2;transform:scaleX(0.84);transform-origin:left;-webkit-text-stroke:0.3px #f2f2f2;">94.7</div><div class="t" style="left:391.10px;top:40.05px;font-size:12.5px;font-weight:normal;font-style:normal;color:#f2f2f2;transform:scaleX(0.84);transform-origin:left;-webkit-text-stroke:0.3px #f2f2f2;">95.5</div><div class="t" style="left:420.10px;top:40.05px;font-size:12.5px;font-weight:normal;font-style:normal;color:#f2f2f2;transform:scaleX(0.84);transform-origin:left;-webkit-text-stroke:0.3px #f2f2f2;">98.0</div><div class="t" style="left:450.10px;top:40.05px;font-size:12.5px;font-weight:normal;font-style:normal;color:#f2f2f2;transform:scaleX(0.84);transform-origin:left;-webkit-text-stroke:0.3px #f2f2f2;">92.4</div><div class="t" style="left:479.10px;top:40.05px;font-size:12.5px;font-weight:normal;font-style:normal;color:#f2f2f2;transform:scaleX(0.84);transform-origin:left;-webkit-text-stroke:0.3px #f2f2f2;">85.7</div><div class="t" style="left:508.10px;top:40.05px;font-size:12.5px;font-weight:normal;font-style:normal;color:#f2f2f2;transform:scaleX(0.84);transform-origin:left;-webkit-text-stroke:0.3px #f2f2f2;">91.3</div><div class="t" style="left:537.10px;top:40.05px;font-size:12.5px;font-weight:normal;font-style:normal;color:#f2f2f2;transform:scaleX(0.84);transform-origin:left;-webkit-text-stroke:0.3px #f2f2f2;">91.3</div><div class="t" style="left:566.10px;top:40.05px;font-size:12.5px;font-weight:normal;font-style:normal;color:#f2f2f2;transform:scaleX(0.84);transform-origin:left;-webkit-text-stroke:0.3px #f2f2f2;">83.9</div><div class="t" style="left:595.10px;top:40.05px;font-size:12.5px;font-weight:normal;font-style:normal;color:#f2f2f2;transform:scaleX(0.84);transform-origin:left;-webkit-text-stroke:0.3px #f2f2f2;">84.2</div><div class="t" style="left:624.10px;top:40.05px;font-size:12.5px;font-weight:normal;font-style:normal;color:#f2f2f2;transform:scaleX(0.84);transform-origin:left;-webkit-text-stroke:0.3px #f2f2f2;">85.1</div><div class="t" style="left:653.10px;top:40.05px;font-size:12.5px;font-weight:normal;font-style:normal;color:#f2f2f2;transform:scaleX(0.84);transform-origin:left;-webkit-text-stroke:0.3px #f2f2f2;">81.9</div><div class="t" style="left:682.10px;top:40.05px;font-size:12.5px;font-weight:normal;font-style:normal;color:#f2f2f2;transform:scaleX(0.84);transform-origin:left;-webkit-text-stroke:0.3px #f2f2f2;">82.0</div><div class="t" style="left:711.10px;top:40.05px;font-size:12.5px;font-weight:normal;font-style:normal;color:#f2f2f2;transform:scaleX(0.84);transform-origin:left;-webkit-text-stroke:0.3px #f2f2f2;">81.1</div><div class="t" style="left:740.10px;top:40.05px;font-size:12.5px;font-weight:normal;font-style:normal;color:#f2f2f2;transform:scaleX(0.84);transform-origin:left;-webkit-text-stroke:0.3px #f2f2f2;">83.2</div><div class="t" style="left:769.10px;top:40.05px;font-size:12.5px;font-weight:normal;font-style:normal;color:#f2f2f2;transform:scaleX(0.84);transform-origin:left;-webkit-text-stroke:0.3px #f2f2f2;">82.7</div><div class="t" style="left:799.10px;top:40.05px;font-size:12.5px;font-weight:normal;font-style:normal;color:#f2f2f2;transform:scaleX(0.84);transform-origin:left;-webkit-text-stroke:0.3px #f2f2f2;">80.9</div><div class="t" style="left:828.10px;top:40.05px;font-size:12.5px;font-weight:normal;font-style:normal;color:#f2f2f2;transform:scaleX(0.84);transform-origin:left;-webkit-text-stroke:0.3px #f2f2f2;">85.6</div><div class="t" style="left:857.10px;top:40.05px;font-size:12.5px;font-weight:normal;font-style:normal;color:#f2f2f2;transform:scaleX(0.84);transform-origin:left;-webkit-text-stroke:0.3px #f2f2f2;">86.6</div><svg style="position:absolute;left:0;top:0;overflow:visible" width="1" height="1"><g transform="translate(-13,-387)"><circle cx="200.4" cy="434.2" r="8.5" fill="none" stroke="#fff" stroke-width="1.9"/><ellipse cx="197.4" cy="430.8" rx="0.9" ry="1.2" fill="#fff"/><ellipse cx="203.4" cy="430.8" rx="0.9" ry="1.2" fill="#fff"/><path d="M194.1 435.5 Q200.4 444.0 206.7 435.5 Q200.4 438.8 194.1 435.5 Z" fill="#fff" stroke="#fff" stroke-width="0.9" stroke-linejoin="round"/></g></svg><div style="position:absolute;left:203.00px;top:41.10px;width:14.00px;height:13.70px;background:#ececec;"></div><svg style="position:absolute;left:203px;top:41.10px" width="14" height="14"><path d="M3 7.5 L5.8 10.3 L11.2 4.2" fill="none" stroke="#8c8c8c" stroke-width="1.7"/></svg><div class="t" style="left:-92.70px;width:200px;text-align:center;top:62.54px;font-size:11px;font-weight:normal;font-style:normal;color:#f2f2f2;">+</div><div class="t" style="left:33.50px;top:60.31px;font-size:12.2px;font-weight:normal;font-style:italic;color:#f2f2f2;transform:scaleX(0.92);transform-origin:left;-webkit-text-stroke:0.3px #f2f2f2;">#1</div><div class="t" style="right:836.80px;top:60.31px;font-size:12.2px;font-weight:normal;font-style:italic;color:#f2f2f2;transform:scaleX(0.86);transform-origin:right;-webkit-text-stroke:0.3px #f2f2f2;">16:59:52</div><div class="t" style="left:224.90px;top:60.05px;font-size:12.5px;font-weight:normal;font-style:italic;color:#f2f2f2;transform:scaleX(0.84);transform-origin:left;-webkit-text-stroke:0.3px #f2f2f2;">96.1</div><div class="t" style="left:275.10px;top:60.05px;font-size:12.5px;font-weight:normal;font-style:italic;color:#f2f2f2;transform:scaleX(0.84);transform-origin:left;-webkit-text-stroke:0.3px #f2f2f2;">74.9</div><div class="t" style="left:304.10px;top:60.05px;font-size:12.5px;font-weight:normal;font-style:italic;color:#f2f2f2;transform:scaleX(0.84);transform-origin:left;-webkit-text-stroke:0.3px #f2f2f2;">75.9</div><div class="t" style="left:333.10px;top:60.05px;font-size:12.5px;font-weight:normal;font-style:italic;color:#f2f2f2;transform:scaleX(0.84);transform-origin:left;-webkit-text-stroke:0.3px #f2f2f2;">77.2</div><div class="t" style="left:362.10px;top:60.05px;font-size:12.5px;font-weight:normal;font-style:italic;color:#f2f2f2;transform:scaleX(0.84);transform-origin:left;-webkit-text-stroke:0.3px #f2f2f2;">94.7</div><div class="t" style="left:391.10px;top:60.05px;font-size:12.5px;font-weight:normal;font-style:italic;color:#f2f2f2;transform:scaleX(0.84);transform-origin:left;-webkit-text-stroke:0.3px #f2f2f2;">95.5</div><div class="t" style="left:420.10px;top:60.05px;font-size:12.5px;font-weight:normal;font-style:italic;color:#f2f2f2;transform:scaleX(0.84);transform-origin:left;-webkit-text-stroke:0.3px #f2f2f2;">98.0</div><div class="t" style="left:450.10px;top:60.05px;font-size:12.5px;font-weight:normal;font-style:italic;color:#f2f2f2;transform:scaleX(0.84);transform-origin:left;-webkit-text-stroke:0.3px #f2f2f2;">92.4</div><div class="t" style="left:479.10px;top:60.05px;font-size:12.5px;font-weight:normal;font-style:italic;color:#f2f2f2;transform:scaleX(0.84);transform-origin:left;-webkit-text-stroke:0.3px #f2f2f2;">85.7</div><div class="t" style="left:508.10px;top:60.05px;font-size:12.5px;font-weight:normal;font-style:italic;color:#f2f2f2;transform:scaleX(0.84);transform-origin:left;-webkit-text-stroke:0.3px #f2f2f2;">91.3</div><div class="t" style="left:537.10px;top:60.05px;font-size:12.5px;font-weight:normal;font-style:italic;color:#f2f2f2;transform:scaleX(0.84);transform-origin:left;-webkit-text-stroke:0.3px #f2f2f2;">91.3</div><div class="t" style="left:566.10px;top:60.05px;font-size:12.5px;font-weight:normal;font-style:italic;color:#f2f2f2;transform:scaleX(0.84);transform-origin:left;-webkit-text-stroke:0.3px #f2f2f2;">83.9</div><div class="t" style="left:595.10px;top:60.05px;font-size:12.5px;font-weight:normal;font-style:italic;color:#f2f2f2;transform:scaleX(0.84);transform-origin:left;-webkit-text-stroke:0.3px #f2f2f2;">84.2</div><div class="t" style="left:624.10px;top:60.05px;font-size:12.5px;font-weight:normal;font-style:italic;color:#f2f2f2;transform:scaleX(0.84);transform-origin:left;-webkit-text-stroke:0.3px #f2f2f2;">85.1</div><div class="t" style="left:653.10px;top:60.05px;font-size:12.5px;font-weight:normal;font-style:italic;color:#f2f2f2;transform:scaleX(0.84);transform-origin:left;-webkit-text-stroke:0.3px #f2f2f2;">81.9</div><div class="t" style="left:682.10px;top:60.05px;font-size:12.5px;font-weight:normal;font-style:italic;color:#f2f2f2;transform:scaleX(0.84);transform-origin:left;-webkit-text-stroke:0.3px #f2f2f2;">82.0</div><div class="t" style="left:711.10px;top:60.05px;font-size:12.5px;font-weight:normal;font-style:italic;color:#f2f2f2;transform:scaleX(0.84);transform-origin:left;-webkit-text-stroke:0.3px #f2f2f2;">81.1</div><div class="t" style="left:740.10px;top:60.05px;font-size:12.5px;font-weight:normal;font-style:italic;color:#f2f2f2;transform:scaleX(0.84);transform-origin:left;-webkit-text-stroke:0.3px #f2f2f2;">83.2</div><div class="t" style="left:769.10px;top:60.05px;font-size:12.5px;font-weight:normal;font-style:italic;color:#f2f2f2;transform:scaleX(0.84);transform-origin:left;-webkit-text-stroke:0.3px #f2f2f2;">82.7</div><div class="t" style="left:799.10px;top:60.05px;font-size:12.5px;font-weight:normal;font-style:italic;color:#f2f2f2;transform:scaleX(0.84);transform-origin:left;-webkit-text-stroke:0.3px #f2f2f2;">80.9</div><div class="t" style="left:828.10px;top:60.05px;font-size:12.5px;font-weight:normal;font-style:italic;color:#f2f2f2;transform:scaleX(0.84);transform-origin:left;-webkit-text-stroke:0.3px #f2f2f2;">85.6</div><div class="t" style="left:857.10px;top:60.05px;font-size:12.5px;font-weight:normal;font-style:italic;color:#f2f2f2;transform:scaleX(0.84);transform-origin:left;-webkit-text-stroke:0.3px #f2f2f2;">86.6</div><svg style="position:absolute;left:0;top:0;overflow:visible" width="1" height="1"><g transform="translate(-13,-387)"><circle cx="200.4" cy="454.2" r="8.5" fill="none" stroke="#fff" stroke-width="1.9"/><ellipse cx="197.4" cy="450.8" rx="0.9" ry="1.2" fill="#fff"/><ellipse cx="203.4" cy="450.8" rx="0.9" ry="1.2" fill="#fff"/><path d="M194.1 455.5 Q200.4 464.0 206.7 455.5 Q200.4 458.8 194.1 455.5 Z" fill="#fff" stroke="#fff" stroke-width="0.9" stroke-linejoin="round"/></g></svg><div style="position:absolute;left:203.00px;top:61.10px;width:14.00px;height:13.70px;background:#ececec;"></div><svg style="position:absolute;left:203px;top:61.10px" width="14" height="14"><path d="M3 7.5 L5.8 10.3 L11.2 4.2" fill="none" stroke="#8c8c8c" stroke-width="1.7"/></svg><div class="t" style="left:-92.70px;width:200px;text-align:center;top:81.74px;font-size:11px;font-weight:normal;font-style:normal;color:#f2f2f2;">-</div><div class="t" style="left:24.40px;top:80.31px;font-size:12.2px;font-weight:normal;font-style:normal;color:#f2f2f2;transform:scaleX(0.925);transform-origin:left;-webkit-text-stroke:0.3px #f2f2f2;">Pos #C</div><div class="t" style="left:224.90px;top:80.05px;font-size:12.5px;font-weight:normal;font-style:normal;color:#f2f2f2;transform:scaleX(0.84);transform-origin:left;-webkit-text-stroke:0.3px #f2f2f2;">96.0</div><div class="t" style="left:275.10px;top:80.05px;font-size:12.5px;font-weight:normal;font-style:normal;color:#f2f2f2;transform:scaleX(0.84);transform-origin:left;-webkit-text-stroke:0.3px #f2f2f2;">76.2</div><div class="t" style="left:304.10px;top:80.05px;font-size:12.5px;font-weight:normal;font-style:normal;color:#f2f2f2;transform:scaleX(0.84);transform-origin:left;-webkit-text-stroke:0.3px #f2f2f2;">76.3</div><div class="t" style="left:333.10px;top:80.05px;font-size:12.5px;font-weight:normal;font-style:normal;color:#f2f2f2;transform:scaleX(0.84);transform-origin:left;-webkit-text-stroke:0.3px #f2f2f2;">77.1</div><div class="t" style="left:362.10px;top:80.05px;font-size:12.5px;font-weight:normal;font-style:normal;color:#f2f2f2;transform:scaleX(0.84);transform-origin:left;-webkit-text-stroke:0.3px #f2f2f2;">94.3</div><div class="t" style="left:391.10px;top:80.05px;font-size:12.5px;font-weight:normal;font-style:normal;color:#f2f2f2;transform:scaleX(0.84);transform-origin:left;-webkit-text-stroke:0.3px #f2f2f2;">95.3</div><div class="t" style="left:420.10px;top:80.05px;font-size:12.5px;font-weight:normal;font-style:normal;color:#f2f2f2;transform:scaleX(0.84);transform-origin:left;-webkit-text-stroke:0.3px #f2f2f2;">97.6</div><div class="t" style="left:450.10px;top:80.05px;font-size:12.5px;font-weight:normal;font-style:normal;color:#f2f2f2;transform:scaleX(0.84);transform-origin:left;-webkit-text-stroke:0.3px #f2f2f2;">92.7</div><div class="t" style="left:479.10px;top:80.05px;font-size:12.5px;font-weight:normal;font-style:normal;color:#f2f2f2;transform:scaleX(0.84);transform-origin:left;-webkit-text-stroke:0.3px #f2f2f2;">85.1</div><div class="t" style="left:508.10px;top:80.05px;font-size:12.5px;font-weight:normal;font-style:normal;color:#f2f2f2;transform:scaleX(0.84);transform-origin:left;-webkit-text-stroke:0.3px #f2f2f2;">91.2</div><div class="t" style="left:537.10px;top:80.05px;font-size:12.5px;font-weight:normal;font-style:normal;color:#f2f2f2;transform:scaleX(0.84);transform-origin:left;-webkit-text-stroke:0.3px #f2f2f2;">91.1</div><div class="t" style="left:566.10px;top:80.05px;font-size:12.5px;font-weight:normal;font-style:normal;color:#f2f2f2;transform:scaleX(0.84);transform-origin:left;-webkit-text-stroke:0.3px #f2f2f2;">83.7</div><div class="t" style="left:595.10px;top:80.05px;font-size:12.5px;font-weight:normal;font-style:normal;color:#f2f2f2;transform:scaleX(0.84);transform-origin:left;-webkit-text-stroke:0.3px #f2f2f2;">84.0</div><div class="t" style="left:624.10px;top:80.05px;font-size:12.5px;font-weight:normal;font-style:normal;color:#f2f2f2;transform:scaleX(0.84);transform-origin:left;-webkit-text-stroke:0.3px #f2f2f2;">85.1</div><div class="t" style="left:653.10px;top:80.05px;font-size:12.5px;font-weight:normal;font-style:normal;color:#f2f2f2;transform:scaleX(0.84);transform-origin:left;-webkit-text-stroke:0.3px #f2f2f2;">81.8</div><div class="t" style="left:682.10px;top:80.05px;font-size:12.5px;font-weight:normal;font-style:normal;color:#f2f2f2;transform:scaleX(0.84);transform-origin:left;-webkit-text-stroke:0.3px #f2f2f2;">82.0</div><div class="t" style="left:711.10px;top:80.05px;font-size:12.5px;font-weight:normal;font-style:normal;color:#f2f2f2;transform:scaleX(0.84);transform-origin:left;-webkit-text-stroke:0.3px #f2f2f2;">81.1</div><div class="t" style="left:740.10px;top:80.05px;font-size:12.5px;font-weight:normal;font-style:normal;color:#f2f2f2;transform:scaleX(0.84);transform-origin:left;-webkit-text-stroke:0.3px #f2f2f2;">83.3</div><div class="t" style="left:769.10px;top:80.05px;font-size:12.5px;font-weight:normal;font-style:normal;color:#f2f2f2;transform:scaleX(0.84);transform-origin:left;-webkit-text-stroke:0.3px #f2f2f2;">82.6</div><div class="t" style="left:799.10px;top:80.05px;font-size:12.5px;font-weight:normal;font-style:normal;color:#f2f2f2;transform:scaleX(0.84);transform-origin:left;-webkit-text-stroke:0.3px #f2f2f2;">80.9</div><div class="t" style="left:828.10px;top:80.05px;font-size:12.5px;font-weight:normal;font-style:normal;color:#f2f2f2;transform:scaleX(0.84);transform-origin:left;-webkit-text-stroke:0.3px #f2f2f2;">85.6</div><div class="t" style="left:857.10px;top:80.05px;font-size:12.5px;font-weight:normal;font-style:normal;color:#f2f2f2;transform:scaleX(0.84);transform-origin:left;-webkit-text-stroke:0.3px #f2f2f2;">86.7</div><svg style="position:absolute;left:0;top:0;overflow:visible" width="1" height="1"><g transform="translate(-13,-387)"><circle cx="200.4" cy="474.2" r="8.5" fill="none" stroke="#fff" stroke-width="1.9"/><ellipse cx="197.4" cy="470.8" rx="0.9" ry="1.2" fill="#fff"/><ellipse cx="203.4" cy="470.8" rx="0.9" ry="1.2" fill="#fff"/><path d="M194.1 475.5 Q200.4 484.0 206.7 475.5 Q200.4 478.8 194.1 475.5 Z" fill="#fff" stroke="#fff" stroke-width="0.9" stroke-linejoin="round"/></g></svg><div style="position:absolute;left:203.00px;top:81.10px;width:14.00px;height:13.70px;background:#ececec;"></div><svg style="position:absolute;left:203px;top:81.10px" width="14" height="14"><path d="M3 7.5 L5.8 10.3 L11.2 4.2" fill="none" stroke="#8c8c8c" stroke-width="1.7"/></svg><div class="t" style="left:-92.70px;width:200px;text-align:center;top:102.54px;font-size:11px;font-weight:normal;font-style:normal;color:#f2f2f2;">+</div><div class="t" style="left:33.50px;top:100.31px;font-size:12.2px;font-weight:normal;font-style:italic;color:#f2f2f2;transform:scaleX(0.92);transform-origin:left;-webkit-text-stroke:0.3px #f2f2f2;">#1</div><div class="t" style="right:836.80px;top:100.31px;font-size:12.2px;font-weight:normal;font-style:italic;color:#f2f2f2;transform:scaleX(0.86);transform-origin:right;-webkit-text-stroke:0.3px #f2f2f2;">17:00:11</div><div class="t" style="left:224.90px;top:100.05px;font-size:12.5px;font-weight:normal;font-style:italic;color:#f2f2f2;transform:scaleX(0.84);transform-origin:left;-webkit-text-stroke:0.3px #f2f2f2;">96.0</div><div class="t" style="left:275.10px;top:100.05px;font-size:12.5px;font-weight:normal;font-style:italic;color:#f2f2f2;transform:scaleX(0.84);transform-origin:left;-webkit-text-stroke:0.3px #f2f2f2;">76.2</div><div class="t" style="left:304.10px;top:100.05px;font-size:12.5px;font-weight:normal;font-style:italic;color:#f2f2f2;transform:scaleX(0.84);transform-origin:left;-webkit-text-stroke:0.3px #f2f2f2;">76.3</div><div class="t" style="left:333.10px;top:100.05px;font-size:12.5px;font-weight:normal;font-style:italic;color:#f2f2f2;transform:scaleX(0.84);transform-origin:left;-webkit-text-stroke:0.3px #f2f2f2;">77.1</div><div class="t" style="left:362.10px;top:100.05px;font-size:12.5px;font-weight:normal;font-style:italic;color:#f2f2f2;transform:scaleX(0.84);transform-origin:left;-webkit-text-stroke:0.3px #f2f2f2;">94.3</div><div class="t" style="left:391.10px;top:100.05px;font-size:12.5px;font-weight:normal;font-style:italic;color:#f2f2f2;transform:scaleX(0.84);transform-origin:left;-webkit-text-stroke:0.3px #f2f2f2;">95.3</div><div class="t" style="left:420.10px;top:100.05px;font-size:12.5px;font-weight:normal;font-style:italic;color:#f2f2f2;transform:scaleX(0.84);transform-origin:left;-webkit-text-stroke:0.3px #f2f2f2;">97.6</div><div class="t" style="left:450.10px;top:100.05px;font-size:12.5px;font-weight:normal;font-style:italic;color:#f2f2f2;transform:scaleX(0.84);transform-origin:left;-webkit-text-stroke:0.3px #f2f2f2;">92.7</div><div class="t" style="left:479.10px;top:100.05px;font-size:12.5px;font-weight:normal;font-style:italic;color:#f2f2f2;transform:scaleX(0.84);transform-origin:left;-webkit-text-stroke:0.3px #f2f2f2;">85.1</div><div class="t" style="left:508.10px;top:100.05px;font-size:12.5px;font-weight:normal;font-style:italic;color:#f2f2f2;transform:scaleX(0.84);transform-origin:left;-webkit-text-stroke:0.3px #f2f2f2;">91.2</div><div class="t" style="left:537.10px;top:100.05px;font-size:12.5px;font-weight:normal;font-style:italic;color:#f2f2f2;transform:scaleX(0.84);transform-origin:left;-webkit-text-stroke:0.3px #f2f2f2;">91.1</div><div class="t" style="left:566.10px;top:100.05px;font-size:12.5px;font-weight:normal;font-style:italic;color:#f2f2f2;transform:scaleX(0.84);transform-origin:left;-webkit-text-stroke:0.3px #f2f2f2;">83.7</div><div class="t" style="left:595.10px;top:100.05px;font-size:12.5px;font-weight:normal;font-style:italic;color:#f2f2f2;transform:scaleX(0.84);transform-origin:left;-webkit-text-stroke:0.3px #f2f2f2;">84.0</div><div class="t" style="left:624.10px;top:100.05px;font-size:12.5px;font-weight:normal;font-style:italic;color:#f2f2f2;transform:scaleX(0.84);transform-origin:left;-webkit-text-stroke:0.3px #f2f2f2;">85.1</div><div class="t" style="left:653.10px;top:100.05px;font-size:12.5px;font-weight:normal;font-style:italic;color:#f2f2f2;transform:scaleX(0.84);transform-origin:left;-webkit-text-stroke:0.3px #f2f2f2;">81.8</div><div class="t" style="left:682.10px;top:100.05px;font-size:12.5px;font-weight:normal;font-style:italic;color:#f2f2f2;transform:scaleX(0.84);transform-origin:left;-webkit-text-stroke:0.3px #f2f2f2;">82.0</div><div class="t" style="left:711.10px;top:100.05px;font-size:12.5px;font-weight:normal;font-style:italic;color:#f2f2f2;transform:scaleX(0.84);transform-origin:left;-webkit-text-stroke:0.3px #f2f2f2;">81.1</div><div class="t" style="left:740.10px;top:100.05px;font-size:12.5px;font-weight:normal;font-style:italic;color:#f2f2f2;transform:scaleX(0.84);transform-origin:left;-webkit-text-stroke:0.3px #f2f2f2;">83.3</div><div class="t" style="left:769.10px;top:100.05px;font-size:12.5px;font-weight:normal;font-style:italic;color:#f2f2f2;transform:scaleX(0.84);transform-origin:left;-webkit-text-stroke:0.3px #f2f2f2;">82.6</div><div class="t" style="left:799.10px;top:100.05px;font-size:12.5px;font-weight:normal;font-style:italic;color:#f2f2f2;transform:scaleX(0.84);transform-origin:left;-webkit-text-stroke:0.3px #f2f2f2;">80.9</div><div class="t" style="left:828.10px;top:100.05px;font-size:12.5px;font-weight:normal;font-style:italic;color:#f2f2f2;transform:scaleX(0.84);transform-origin:left;-webkit-text-stroke:0.3px #f2f2f2;">85.6</div><div class="t" style="left:857.10px;top:100.05px;font-size:12.5px;font-weight:normal;font-style:italic;color:#f2f2f2;transform:scaleX(0.84);transform-origin:left;-webkit-text-stroke:0.3px #f2f2f2;">86.7</div><svg style="position:absolute;left:0;top:0;overflow:visible" width="1" height="1"><g transform="translate(-13,-387)"><circle cx="200.4" cy="494.2" r="8.5" fill="none" stroke="#fff" stroke-width="1.9"/><ellipse cx="197.4" cy="490.8" rx="0.9" ry="1.2" fill="#fff"/><ellipse cx="203.4" cy="490.8" rx="0.9" ry="1.2" fill="#fff"/><path d="M194.1 495.5 Q200.4 504.0 206.7 495.5 Q200.4 498.8 194.1 495.5 Z" fill="#fff" stroke="#fff" stroke-width="0.9" stroke-linejoin="round"/></g></svg><div style="position:absolute;left:203.00px;top:101.10px;width:14.00px;height:13.70px;background:#ececec;"></div><svg style="position:absolute;left:203px;top:101.10px" width="14" height="14"><path d="M3 7.5 L5.8 10.3 L11.2 4.2" fill="none" stroke="#8c8c8c" stroke-width="1.7"/></svg><div class="t" style="left:-92.70px;width:200px;text-align:center;top:121.74px;font-size:11px;font-weight:normal;font-style:normal;color:#f2f2f2;">-</div><div class="t" style="left:24.40px;top:120.31px;font-size:12.2px;font-weight:normal;font-style:normal;color:#f2f2f2;transform:scaleX(0.925);transform-origin:left;-webkit-text-stroke:0.3px #f2f2f2;">Pos #D</div><div class="t" style="left:224.90px;top:120.05px;font-size:12.5px;font-weight:normal;font-style:normal;color:#f2f2f2;transform:scaleX(0.84);transform-origin:left;-webkit-text-stroke:0.3px #f2f2f2;">96.0</div><div class="t" style="left:275.10px;top:120.05px;font-size:12.5px;font-weight:normal;font-style:normal;color:#f2f2f2;transform:scaleX(0.84);transform-origin:left;-webkit-text-stroke:0.3px #f2f2f2;">75.5</div><div class="t" style="left:304.10px;top:120.05px;font-size:12.5px;font-weight:normal;font-style:normal;color:#f2f2f2;transform:scaleX(0.84);transform-origin:left;-webkit-text-stroke:0.3px #f2f2f2;">76.3</div><div class="t" style="left:333.10px;top:120.05px;font-size:12.5px;font-weight:normal;font-style:normal;color:#f2f2f2;transform:scaleX(0.84);transform-origin:left;-webkit-text-stroke:0.3px #f2f2f2;">77.1</div><div class="t" style="left:362.10px;top:120.05px;font-size:12.5px;font-weight:normal;font-style:normal;color:#f2f2f2;transform:scaleX(0.84);transform-origin:left;-webkit-text-stroke:0.3px #f2f2f2;">94.3</div><div class="t" style="left:391.10px;top:120.05px;font-size:12.5px;font-weight:normal;font-style:normal;color:#f2f2f2;transform:scaleX(0.84);transform-origin:left;-webkit-text-stroke:0.3px #f2f2f2;">95.0</div><div class="t" style="left:420.10px;top:120.05px;font-size:12.5px;font-weight:normal;font-style:normal;color:#f2f2f2;transform:scaleX(0.84);transform-origin:left;-webkit-text-stroke:0.3px #f2f2f2;">97.7</div><div class="t" style="left:450.10px;top:120.05px;font-size:12.5px;font-weight:normal;font-style:normal;color:#f2f2f2;transform:scaleX(0.84);transform-origin:left;-webkit-text-stroke:0.3px #f2f2f2;">92.5</div><div class="t" style="left:479.10px;top:120.05px;font-size:12.5px;font-weight:normal;font-style:normal;color:#f2f2f2;transform:scaleX(0.84);transform-origin:left;-webkit-text-stroke:0.3px #f2f2f2;">85.2</div><div class="t" style="left:508.10px;top:120.05px;font-size:12.5px;font-weight:normal;font-style:normal;color:#f2f2f2;transform:scaleX(0.84);transform-origin:left;-webkit-text-stroke:0.3px #f2f2f2;">90.8</div><div class="t" style="left:537.10px;top:120.05px;font-size:12.5px;font-weight:normal;font-style:normal;color:#f2f2f2;transform:scaleX(0.84);transform-origin:left;-webkit-text-stroke:0.3px #f2f2f2;">91.5</div><div class="t" style="left:566.10px;top:120.05px;font-size:12.5px;font-weight:normal;font-style:normal;color:#f2f2f2;transform:scaleX(0.84);transform-origin:left;-webkit-text-stroke:0.3px #f2f2f2;">83.7</div><div class="t" style="left:595.10px;top:120.05px;font-size:12.5px;font-weight:normal;font-style:normal;color:#f2f2f2;transform:scaleX(0.84);transform-origin:left;-webkit-text-stroke:0.3px #f2f2f2;">83.8</div><div class="t" style="left:624.10px;top:120.05px;font-size:12.5px;font-weight:normal;font-style:normal;color:#f2f2f2;transform:scaleX(0.84);transform-origin:left;-webkit-text-stroke:0.3px #f2f2f2;">84.7</div><div class="t" style="left:653.10px;top:120.05px;font-size:12.5px;font-weight:normal;font-style:normal;color:#f2f2f2;transform:scaleX(0.84);transform-origin:left;-webkit-text-stroke:0.3px #f2f2f2;">81.8</div><div class="t" style="left:682.10px;top:120.05px;font-size:12.5px;font-weight:normal;font-style:normal;color:#f2f2f2;transform:scaleX(0.84);transform-origin:left;-webkit-text-stroke:0.3px #f2f2f2;">82.2</div><div class="t" style="left:711.10px;top:120.05px;font-size:12.5px;font-weight:normal;font-style:normal;color:#f2f2f2;transform:scaleX(0.84);transform-origin:left;-webkit-text-stroke:0.3px #f2f2f2;">81.1</div><div class="t" style="left:740.10px;top:120.05px;font-size:12.5px;font-weight:normal;font-style:normal;color:#f2f2f2;transform:scaleX(0.84);transform-origin:left;-webkit-text-stroke:0.3px #f2f2f2;">83.2</div><div class="t" style="left:769.10px;top:120.05px;font-size:12.5px;font-weight:normal;font-style:normal;color:#f2f2f2;transform:scaleX(0.84);transform-origin:left;-webkit-text-stroke:0.3px #f2f2f2;">82.6</div><div class="t" style="left:799.10px;top:120.05px;font-size:12.5px;font-weight:normal;font-style:normal;color:#f2f2f2;transform:scaleX(0.84);transform-origin:left;-webkit-text-stroke:0.3px #f2f2f2;">80.9</div><div class="t" style="left:828.10px;top:120.05px;font-size:12.5px;font-weight:normal;font-style:normal;color:#f2f2f2;transform:scaleX(0.84);transform-origin:left;-webkit-text-stroke:0.3px #f2f2f2;">85.5</div><div class="t" style="left:857.10px;top:120.05px;font-size:12.5px;font-weight:normal;font-style:normal;color:#f2f2f2;transform:scaleX(0.84);transform-origin:left;-webkit-text-stroke:0.3px #f2f2f2;">86.6</div><svg style="position:absolute;left:0;top:0;overflow:visible" width="1" height="1"><g transform="translate(-13,-387)"><circle cx="200.4" cy="514.2" r="8.5" fill="none" stroke="#fff" stroke-width="1.9"/><ellipse cx="197.4" cy="510.8" rx="0.9" ry="1.2" fill="#fff"/><ellipse cx="203.4" cy="510.8" rx="0.9" ry="1.2" fill="#fff"/><path d="M194.1 515.5 Q200.4 524.0 206.7 515.5 Q200.4 518.8 194.1 515.5 Z" fill="#fff" stroke="#fff" stroke-width="0.9" stroke-linejoin="round"/></g></svg><div style="position:absolute;left:203.00px;top:121.10px;width:14.00px;height:13.70px;background:#ececec;"></div><svg style="position:absolute;left:203px;top:121.10px" width="14" height="14"><path d="M3 7.5 L5.8 10.3 L11.2 4.2" fill="none" stroke="#8c8c8c" stroke-width="1.7"/></svg><div class="t" style="left:-92.70px;width:200px;text-align:center;top:142.54px;font-size:11px;font-weight:normal;font-style:normal;color:#f2f2f2;">+</div><div class="t" style="left:33.50px;top:140.31px;font-size:12.2px;font-weight:normal;font-style:italic;color:#f2f2f2;transform:scaleX(0.92);transform-origin:left;-webkit-text-stroke:0.3px #f2f2f2;">#1</div><div class="t" style="right:836.80px;top:140.31px;font-size:12.2px;font-weight:normal;font-style:italic;color:#f2f2f2;transform:scaleX(0.86);transform-origin:right;-webkit-text-stroke:0.3px #f2f2f2;">17:00:44</div><div class="t" style="left:224.90px;top:140.05px;font-size:12.5px;font-weight:normal;font-style:italic;color:#f2f2f2;transform:scaleX(0.84);transform-origin:left;-webkit-text-stroke:0.3px #f2f2f2;">96.0</div><div class="t" style="left:275.10px;top:140.05px;font-size:12.5px;font-weight:normal;font-style:italic;color:#f2f2f2;transform:scaleX(0.84);transform-origin:left;-webkit-text-stroke:0.3px #f2f2f2;">75.5</div><div class="t" style="left:304.10px;top:140.05px;font-size:12.5px;font-weight:normal;font-style:italic;color:#f2f2f2;transform:scaleX(0.84);transform-origin:left;-webkit-text-stroke:0.3px #f2f2f2;">76.3</div><div class="t" style="left:333.10px;top:140.05px;font-size:12.5px;font-weight:normal;font-style:italic;color:#f2f2f2;transform:scaleX(0.84);transform-origin:left;-webkit-text-stroke:0.3px #f2f2f2;">77.1</div><div class="t" style="left:362.10px;top:140.05px;font-size:12.5px;font-weight:normal;font-style:italic;color:#f2f2f2;transform:scaleX(0.84);transform-origin:left;-webkit-text-stroke:0.3px #f2f2f2;">94.3</div><div class="t" style="left:391.10px;top:140.05px;font-size:12.5px;font-weight:normal;font-style:italic;color:#f2f2f2;transform:scaleX(0.84);transform-origin:left;-webkit-text-stroke:0.3px #f2f2f2;">95.0</div><div class="t" style="left:420.10px;top:140.05px;font-size:12.5px;font-weight:normal;font-style:italic;color:#f2f2f2;transform:scaleX(0.84);transform-origin:left;-webkit-text-stroke:0.3px #f2f2f2;">97.7</div><div class="t" style="left:450.10px;top:140.05px;font-size:12.5px;font-weight:normal;font-style:italic;color:#f2f2f2;transform:scaleX(0.84);transform-origin:left;-webkit-text-stroke:0.3px #f2f2f2;">92.5</div><div class="t" style="left:479.10px;top:140.05px;font-size:12.5px;font-weight:normal;font-style:italic;color:#f2f2f2;transform:scaleX(0.84);transform-origin:left;-webkit-text-stroke:0.3px #f2f2f2;">85.2</div><div class="t" style="left:508.10px;top:140.05px;font-size:12.5px;font-weight:normal;font-style:italic;color:#f2f2f2;transform:scaleX(0.84);transform-origin:left;-webkit-text-stroke:0.3px #f2f2f2;">90.8</div><div class="t" style="left:537.10px;top:140.05px;font-size:12.5px;font-weight:normal;font-style:italic;color:#f2f2f2;transform:scaleX(0.84);transform-origin:left;-webkit-text-stroke:0.3px #f2f2f2;">91.5</div><div class="t" style="left:566.10px;top:140.05px;font-size:12.5px;font-weight:normal;font-style:italic;color:#f2f2f2;transform:scaleX(0.84);transform-origin:left;-webkit-text-stroke:0.3px #f2f2f2;">83.7</div><div class="t" style="left:595.10px;top:140.05px;font-size:12.5px;font-weight:normal;font-style:italic;color:#f2f2f2;transform:scaleX(0.84);transform-origin:left;-webkit-text-stroke:0.3px #f2f2f2;">83.8</div><div class="t" style="left:624.10px;top:140.05px;font-size:12.5px;font-weight:normal;font-style:italic;color:#f2f2f2;transform:scaleX(0.84);transform-origin:left;-webkit-text-stroke:0.3px #f2f2f2;">84.7</div><div class="t" style="left:653.10px;top:140.05px;font-size:12.5px;font-weight:normal;font-style:italic;color:#f2f2f2;transform:scaleX(0.84);transform-origin:left;-webkit-text-stroke:0.3px #f2f2f2;">81.8</div><div class="t" style="left:682.10px;top:140.05px;font-size:12.5px;font-weight:normal;font-style:italic;color:#f2f2f2;transform:scaleX(0.84);transform-origin:left;-webkit-text-stroke:0.3px #f2f2f2;">82.2</div><div class="t" style="left:711.10px;top:140.05px;font-size:12.5px;font-weight:normal;font-style:italic;color:#f2f2f2;transform:scaleX(0.84);transform-origin:left;-webkit-text-stroke:0.3px #f2f2f2;">81.1</div><div class="t" style="left:740.10px;top:140.05px;font-size:12.5px;font-weight:normal;font-style:italic;color:#f2f2f2;transform:scaleX(0.84);transform-origin:left;-webkit-text-stroke:0.3px #f2f2f2;">83.2</div><div class="t" style="left:769.10px;top:140.05px;font-size:12.5px;font-weight:normal;font-style:italic;color:#f2f2f2;transform:scaleX(0.84);transform-origin:left;-webkit-text-stroke:0.3px #f2f2f2;">82.6</div><div class="t" style="left:799.10px;top:140.05px;font-size:12.5px;font-weight:normal;font-style:italic;color:#f2f2f2;transform:scaleX(0.84);transform-origin:left;-webkit-text-stroke:0.3px #f2f2f2;">80.9</div><div class="t" style="left:828.10px;top:140.05px;font-size:12.5px;font-weight:normal;font-style:italic;color:#f2f2f2;transform:scaleX(0.84);transform-origin:left;-webkit-text-stroke:0.3px #f2f2f2;">85.5</div><div class="t" style="left:857.10px;top:140.05px;font-size:12.5px;font-weight:normal;font-style:italic;color:#f2f2f2;transform:scaleX(0.84);transform-origin:left;-webkit-text-stroke:0.3px #f2f2f2;">86.6</div><svg style="position:absolute;left:0;top:0;overflow:visible" width="1" height="1"><g transform="translate(-13,-387)"><circle cx="200.4" cy="534.2" r="8.5" fill="none" stroke="#fff" stroke-width="1.9"/><ellipse cx="197.4" cy="530.8" rx="0.9" ry="1.2" fill="#fff"/><ellipse cx="203.4" cy="530.8" rx="0.9" ry="1.2" fill="#fff"/><path d="M194.1 535.5 Q200.4 544.0 206.7 535.5 Q200.4 538.8 194.1 535.5 Z" fill="#fff" stroke="#fff" stroke-width="0.9" stroke-linejoin="round"/></g></svg><div style="position:absolute;left:203.00px;top:141.10px;width:14.00px;height:13.70px;background:#ececec;"></div><svg style="position:absolute;left:203px;top:141.10px" width="14" height="14"><path d="M3 7.5 L5.8 10.3 L11.2 4.2" fill="none" stroke="#8c8c8c" stroke-width="1.7"/></svg><div class="t" style="left:-92.70px;width:200px;text-align:center;top:161.74px;font-size:11px;font-weight:normal;font-style:normal;color:#f2f2f2;">-</div><div class="t" style="left:14.90px;top:160.31px;font-size:12.2px;font-weight:bold;font-style:normal;color:#f2f2f2;transform:scaleX(0.95);transform-origin:left;">Receiving</div><div class="t" style="left:224.90px;top:160.05px;font-size:12.5px;font-weight:bold;font-style:normal;color:#f2f2f2;transform:scaleX(0.98);transform-origin:left;">64.6</div><div class="t" style="left:275.10px;top:160.05px;font-size:12.5px;font-weight:bold;font-style:normal;color:#f2f2f2;transform:scaleX(0.98);transform-origin:left;">64.3</div><div class="t" style="left:304.10px;top:160.05px;font-size:12.5px;font-weight:bold;font-style:normal;color:#f2f2f2;transform:scaleX(0.98);transform-origin:left;">63.8</div><div class="t" style="left:333.10px;top:160.05px;font-size:12.5px;font-weight:bold;font-style:normal;color:#f2f2f2;transform:scaleX(0.98);transform-origin:left;">68.3</div><div class="t" style="left:362.10px;top:160.05px;font-size:12.5px;font-weight:bold;font-style:normal;color:#f2f2f2;transform:scaleX(0.98);transform-origin:left;">70.5</div><div class="t" style="left:391.10px;top:160.05px;font-size:12.5px;font-weight:bold;font-style:normal;color:#f2f2f2;transform:scaleX(0.98);transform-origin:left;">79.1</div><div class="t" style="left:420.10px;top:160.05px;font-size:12.5px;font-weight:bold;font-style:normal;color:#f2f2f2;transform:scaleX(0.98);transform-origin:left;">69.0</div><div class="t" style="left:450.10px;top:160.05px;font-size:12.5px;font-weight:bold;font-style:normal;color:#f2f2f2;transform:scaleX(0.98);transform-origin:left;">64.3</div><div class="t" style="left:479.10px;top:160.05px;font-size:12.5px;font-weight:bold;font-style:normal;color:#f2f2f2;transform:scaleX(0.98);transform-origin:left;">56.4</div><div class="t" style="left:508.10px;top:160.05px;font-size:12.5px;font-weight:bold;font-style:normal;color:#f2f2f2;transform:scaleX(0.98);transform-origin:left;">48.1</div><div class="t" style="left:537.10px;top:160.05px;font-size:12.5px;font-weight:bold;font-style:normal;color:#f2f2f2;transform:scaleX(0.98);transform-origin:left;">50.2</div><div class="t" style="left:566.10px;top:160.05px;font-size:12.5px;font-weight:bold;font-style:normal;color:#f2f2f2;transform:scaleX(0.98);transform-origin:left;">43.0</div><div class="t" style="left:595.10px;top:160.05px;font-size:12.5px;font-weight:bold;font-style:normal;color:#f2f2f2;transform:scaleX(0.98);transform-origin:left;">40.1</div><div class="t" style="left:624.10px;top:160.05px;font-size:12.5px;font-weight:bold;font-style:normal;color:#f2f2f2;transform:scaleX(0.98);transform-origin:left;">37.5</div><div class="t" style="left:653.10px;top:160.05px;font-size:12.5px;font-weight:bold;font-style:normal;color:#f2f2f2;transform:scaleX(0.98);transform-origin:left;">33.2</div><div class="t" style="left:682.10px;top:160.05px;font-size:12.5px;font-weight:bold;font-style:normal;color:#f2f2f2;transform:scaleX(0.98);transform-origin:left;">30.8</div><div class="t" style="left:711.10px;top:160.05px;font-size:12.5px;font-weight:bold;font-style:normal;color:#f2f2f2;transform:scaleX(0.98);transform-origin:left;">32.6</div><div class="t" style="left:740.10px;top:160.05px;font-size:12.5px;font-weight:bold;font-style:normal;color:#f2f2f2;transform:scaleX(0.98);transform-origin:left;">28.6</div><div class="t" style="left:769.10px;top:160.05px;font-size:12.5px;font-weight:bold;font-style:normal;color:#f2f2f2;transform:scaleX(0.98);transform-origin:left;">29.6</div><div class="t" style="left:799.10px;top:160.05px;font-size:12.5px;font-weight:bold;font-style:normal;color:#f2f2f2;transform:scaleX(0.98);transform-origin:left;">31.1</div><div class="t" style="left:828.10px;top:160.05px;font-size:12.5px;font-weight:bold;font-style:normal;color:#f2f2f2;transform:scaleX(0.98);transform-origin:left;">33.9</div><div class="t" style="left:857.10px;top:160.05px;font-size:12.5px;font-weight:bold;font-style:normal;color:#f2f2f2;transform:scaleX(0.98);transform-origin:left;">35.4</div><svg style="position:absolute;left:0;top:0;overflow:visible" width="1" height="1"><g transform="translate(-13,-387)"><circle cx="200.4" cy="554.2" r="8.5" fill="none" stroke="#fff" stroke-width="1.9"/><ellipse cx="197.4" cy="550.8" rx="0.9" ry="1.2" fill="#fff"/><ellipse cx="203.4" cy="550.8" rx="0.9" ry="1.2" fill="#fff"/><path d="M195.9 559.0 Q200.4 556.0 204.9 559.0" fill="none" stroke="#fff" stroke-width="1"/></g></svg><div class="t" style="left:-92.70px;width:200px;text-align:center;top:181.74px;font-size:11px;font-weight:normal;font-style:normal;color:#f2f2f2;">-</div><div class="t" style="left:24.40px;top:180.31px;font-size:12.2px;font-weight:normal;font-style:normal;color:#f2f2f2;transform:scaleX(0.925);transform-origin:left;-webkit-text-stroke:0.3px #f2f2f2;">Pos #A</div><div class="t" style="left:224.90px;top:180.05px;font-size:12.5px;font-weight:normal;font-style:normal;color:#f2f2f2;transform:scaleX(0.84);transform-origin:left;-webkit-text-stroke:0.3px #f2f2f2;">64.5</div><div class="t" style="left:275.10px;top:180.05px;font-size:12.5px;font-weight:normal;font-style:normal;color:#f2f2f2;transform:scaleX(0.84);transform-origin:left;-webkit-text-stroke:0.3px #f2f2f2;">63.9</div><div class="t" style="left:304.10px;top:180.05px;font-size:12.5px;font-weight:normal;font-style:normal;color:#f2f2f2;transform:scaleX(0.84);transform-origin:left;-webkit-text-stroke:0.3px #f2f2f2;">63.4</div><div class="t" style="left:333.10px;top:180.05px;font-size:12.5px;font-weight:normal;font-style:normal;color:#f2f2f2;transform:scaleX(0.84);transform-origin:left;-webkit-text-stroke:0.3px #f2f2f2;">68.5</div><div class="t" style="left:362.10px;top:180.05px;font-size:12.5px;font-weight:normal;font-style:normal;color:#f2f2f2;transform:scaleX(0.84);transform-origin:left;-webkit-text-stroke:0.3px #f2f2f2;">70.4</div><div class="t" style="left:391.10px;top:180.05px;font-size:12.5px;font-weight:normal;font-style:normal;color:#f2f2f2;transform:scaleX(0.84);transform-origin:left;-webkit-text-stroke:0.3px #f2f2f2;">78.9</div><div class="t" style="left:420.10px;top:180.05px;font-size:12.5px;font-weight:normal;font-style:normal;color:#f2f2f2;transform:scaleX(0.84);transform-origin:left;-webkit-text-stroke:0.3px #f2f2f2;">69.2</div><div class="t" style="left:450.10px;top:180.05px;font-size:12.5px;font-weight:normal;font-style:normal;color:#f2f2f2;transform:scaleX(0.84);transform-origin:left;-webkit-text-stroke:0.3px #f2f2f2;">64.1</div><div class="t" style="left:479.10px;top:180.05px;font-size:12.5px;font-weight:normal;font-style:normal;color:#f2f2f2;transform:scaleX(0.84);transform-origin:left;-webkit-text-stroke:0.3px #f2f2f2;">55.9</div><div class="t" style="left:508.10px;top:180.05px;font-size:12.5px;font-weight:normal;font-style:normal;color:#f2f2f2;transform:scaleX(0.84);transform-origin:left;-webkit-text-stroke:0.3px #f2f2f2;">47.9</div><div class="t" style="left:537.10px;top:180.05px;font-size:12.5px;font-weight:normal;font-style:normal;color:#f2f2f2;transform:scaleX(0.84);transform-origin:left;-webkit-text-stroke:0.3px #f2f2f2;">50.2</div><div class="t" style="left:566.10px;top:180.05px;font-size:12.5px;font-weight:normal;font-style:normal;color:#f2f2f2;transform:scaleX(0.84);transform-origin:left;-webkit-text-stroke:0.3px #f2f2f2;">42.7</div><div class="t" style="left:595.10px;top:180.05px;font-size:12.5px;font-weight:normal;font-style:normal;color:#f2f2f2;transform:scaleX(0.84);transform-origin:left;-webkit-text-stroke:0.3px #f2f2f2;">40.1</div><div class="t" style="left:624.10px;top:180.05px;font-size:12.5px;font-weight:normal;font-style:normal;color:#f2f2f2;transform:scaleX(0.84);transform-origin:left;-webkit-text-stroke:0.3px #f2f2f2;">37.5</div><div class="t" style="left:653.10px;top:180.05px;font-size:12.5px;font-weight:normal;font-style:normal;color:#f2f2f2;transform:scaleX(0.84);transform-origin:left;-webkit-text-stroke:0.3px #f2f2f2;">33.3</div><div class="t" style="left:682.10px;top:180.05px;font-size:12.5px;font-weight:normal;font-style:normal;color:#f2f2f2;transform:scaleX(0.84);transform-origin:left;-webkit-text-stroke:0.3px #f2f2f2;">30.7</div><div class="t" style="left:711.10px;top:180.05px;font-size:12.5px;font-weight:normal;font-style:normal;color:#f2f2f2;transform:scaleX(0.84);transform-origin:left;-webkit-text-stroke:0.3px #f2f2f2;">32.4</div><div class="t" style="left:740.10px;top:180.05px;font-size:12.5px;font-weight:normal;font-style:normal;color:#f2f2f2;transform:scaleX(0.84);transform-origin:left;-webkit-text-stroke:0.3px #f2f2f2;">28.6</div><div class="t" style="left:769.10px;top:180.05px;font-size:12.5px;font-weight:normal;font-style:normal;color:#f2f2f2;transform:scaleX(0.84);transform-origin:left;-webkit-text-stroke:0.3px #f2f2f2;">29.6</div><div class="t" style="left:799.10px;top:180.05px;font-size:12.5px;font-weight:normal;font-style:normal;color:#f2f2f2;transform:scaleX(0.84);transform-origin:left;-webkit-text-stroke:0.3px #f2f2f2;">31.2</div><div class="t" style="left:828.10px;top:180.05px;font-size:12.5px;font-weight:normal;font-style:normal;color:#f2f2f2;transform:scaleX(0.84);transform-origin:left;-webkit-text-stroke:0.3px #f2f2f2;">33.8</div><div class="t" style="left:857.10px;top:180.05px;font-size:12.5px;font-weight:normal;font-style:normal;color:#f2f2f2;transform:scaleX(0.84);transform-origin:left;-webkit-text-stroke:0.3px #f2f2f2;">35.4</div><svg style="position:absolute;left:0;top:0;overflow:visible" width="1" height="1"><g transform="translate(-13,-387)"><circle cx="200.4" cy="574.2" r="8.5" fill="none" stroke="#fff" stroke-width="1.9"/><ellipse cx="197.4" cy="570.8" rx="0.9" ry="1.2" fill="#fff"/><ellipse cx="203.4" cy="570.8" rx="0.9" ry="1.2" fill="#fff"/><path d="M195.9 579.0 Q200.4 576.0 204.9 579.0" fill="none" stroke="#fff" stroke-width="1"/></g></svg><div style="position:absolute;left:203.00px;top:181.10px;width:14.00px;height:13.70px;background:#ececec;"></div><svg style="position:absolute;left:203px;top:181.10px" width="14" height="14"><path d="M3 7.5 L5.8 10.3 L11.2 4.2" fill="none" stroke="#8c8c8c" stroke-width="1.7"/></svg><div class="t" style="left:-92.70px;width:200px;text-align:center;top:202.54px;font-size:11px;font-weight:normal;font-style:normal;color:#f2f2f2;">+</div><div class="t" style="left:33.50px;top:200.31px;font-size:12.2px;font-weight:normal;font-style:italic;color:#f2f2f2;transform:scaleX(0.92);transform-origin:left;-webkit-text-stroke:0.3px #f2f2f2;">#1</div><div class="t" style="right:836.80px;top:200.31px;font-size:12.2px;font-weight:normal;font-style:italic;color:#f2f2f2;transform:scaleX(0.86);transform-origin:right;-webkit-text-stroke:0.3px #f2f2f2;">16:57:03</div><div class="t" style="left:224.90px;top:200.05px;font-size:12.5px;font-weight:normal;font-style:italic;color:#f2f2f2;transform:scaleX(0.84);transform-origin:left;-webkit-text-stroke:0.3px #f2f2f2;">64.5</div><div class="t" style="left:275.10px;top:200.05px;font-size:12.5px;font-weight:normal;font-style:italic;color:#f2f2f2;transform:scaleX(0.84);transform-origin:left;-webkit-text-stroke:0.3px #f2f2f2;">63.9</div><div class="t" style="left:304.10px;top:200.05px;font-size:12.5px;font-weight:normal;font-style:italic;color:#f2f2f2;transform:scaleX(0.84);transform-origin:left;-webkit-text-stroke:0.3px #f2f2f2;">63.4</div><div class="t" style="left:333.10px;top:200.05px;font-size:12.5px;font-weight:normal;font-style:italic;color:#f2f2f2;transform:scaleX(0.84);transform-origin:left;-webkit-text-stroke:0.3px #f2f2f2;">68.5</div><div class="t" style="left:362.10px;top:200.05px;font-size:12.5px;font-weight:normal;font-style:italic;color:#f2f2f2;transform:scaleX(0.84);transform-origin:left;-webkit-text-stroke:0.3px #f2f2f2;">70.4</div><div class="t" style="left:391.10px;top:200.05px;font-size:12.5px;font-weight:normal;font-style:italic;color:#f2f2f2;transform:scaleX(0.84);transform-origin:left;-webkit-text-stroke:0.3px #f2f2f2;">78.9</div><div class="t" style="left:420.10px;top:200.05px;font-size:12.5px;font-weight:normal;font-style:italic;color:#f2f2f2;transform:scaleX(0.84);transform-origin:left;-webkit-text-stroke:0.3px #f2f2f2;">69.2</div><div class="t" style="left:450.10px;top:200.05px;font-size:12.5px;font-weight:normal;font-style:italic;color:#f2f2f2;transform:scaleX(0.84);transform-origin:left;-webkit-text-stroke:0.3px #f2f2f2;">64.1</div><div class="t" style="left:479.10px;top:200.05px;font-size:12.5px;font-weight:normal;font-style:italic;color:#f2f2f2;transform:scaleX(0.84);transform-origin:left;-webkit-text-stroke:0.3px #f2f2f2;">55.9</div><div class="t" style="left:508.10px;top:200.05px;font-size:12.5px;font-weight:normal;font-style:italic;color:#f2f2f2;transform:scaleX(0.84);transform-origin:left;-webkit-text-stroke:0.3px #f2f2f2;">47.9</div><div class="t" style="left:537.10px;top:200.05px;font-size:12.5px;font-weight:normal;font-style:italic;color:#f2f2f2;transform:scaleX(0.84);transform-origin:left;-webkit-text-stroke:0.3px #f2f2f2;">50.2</div><div class="t" style="left:566.10px;top:200.05px;font-size:12.5px;font-weight:normal;font-style:italic;color:#f2f2f2;transform:scaleX(0.84);transform-origin:left;-webkit-text-stroke:0.3px #f2f2f2;">42.7</div><div class="t" style="left:595.10px;top:200.05px;font-size:12.5px;font-weight:normal;font-style:italic;color:#f2f2f2;transform:scaleX(0.84);transform-origin:left;-webkit-text-stroke:0.3px #f2f2f2;">40.1</div><div class="t" style="left:624.10px;top:200.05px;font-size:12.5px;font-weight:normal;font-style:italic;color:#f2f2f2;transform:scaleX(0.84);transform-origin:left;-webkit-text-stroke:0.3px #f2f2f2;">37.5</div><div class="t" style="left:653.10px;top:200.05px;font-size:12.5px;font-weight:normal;font-style:italic;color:#f2f2f2;transform:scaleX(0.84);transform-origin:left;-webkit-text-stroke:0.3px #f2f2f2;">33.3</div><div class="t" style="left:682.10px;top:200.05px;font-size:12.5px;font-weight:normal;font-style:italic;color:#f2f2f2;transform:scaleX(0.84);transform-origin:left;-webkit-text-stroke:0.3px #f2f2f2;">30.7</div><div class="t" style="left:711.10px;top:200.05px;font-size:12.5px;font-weight:normal;font-style:italic;color:#f2f2f2;transform:scaleX(0.84);transform-origin:left;-webkit-text-stroke:0.3px #f2f2f2;">32.4</div><div class="t" style="left:740.10px;top:200.05px;font-size:12.5px;font-weight:normal;font-style:italic;color:#f2f2f2;transform:scaleX(0.84);transform-origin:left;-webkit-text-stroke:0.3px #f2f2f2;">28.6</div><div class="t" style="left:769.10px;top:200.05px;font-size:12.5px;font-weight:normal;font-style:italic;color:#f2f2f2;transform:scaleX(0.84);transform-origin:left;-webkit-text-stroke:0.3px #f2f2f2;">29.6</div><div class="t" style="left:799.10px;top:200.05px;font-size:12.5px;font-weight:normal;font-style:italic;color:#f2f2f2;transform:scaleX(0.84);transform-origin:left;-webkit-text-stroke:0.3px #f2f2f2;">31.2</div><div class="t" style="left:828.10px;top:200.05px;font-size:12.5px;font-weight:normal;font-style:italic;color:#f2f2f2;transform:scaleX(0.84);transform-origin:left;-webkit-text-stroke:0.3px #f2f2f2;">33.8</div><div class="t" style="left:857.10px;top:200.05px;font-size:12.5px;font-weight:normal;font-style:italic;color:#f2f2f2;transform:scaleX(0.84);transform-origin:left;-webkit-text-stroke:0.3px #f2f2f2;">35.4</div><svg style="position:absolute;left:0;top:0;overflow:visible" width="1" height="1"><g transform="translate(-13,-387)"><circle cx="200.4" cy="594.2" r="8.5" fill="none" stroke="#fff" stroke-width="1.9"/><ellipse cx="197.4" cy="590.8" rx="0.9" ry="1.2" fill="#fff"/><ellipse cx="203.4" cy="590.8" rx="0.9" ry="1.2" fill="#fff"/><path d="M195.9 599.0 Q200.4 596.0 204.9 599.0" fill="none" stroke="#fff" stroke-width="1"/></g></svg><div style="position:absolute;left:203.00px;top:201.10px;width:14.00px;height:13.70px;background:#ececec;"></div><svg style="position:absolute;left:203px;top:201.10px" width="14" height="14"><path d="M3 7.5 L5.8 10.3 L11.2 4.2" fill="none" stroke="#8c8c8c" stroke-width="1.7"/></svg><div class="t" style="left:-92.70px;width:200px;text-align:center;top:221.74px;font-size:11px;font-weight:normal;font-style:normal;color:#f2f2f2;">-</div><div class="t" style="left:24.40px;top:220.31px;font-size:12.2px;font-weight:normal;font-style:normal;color:#f2f2f2;transform:scaleX(0.925);transform-origin:left;-webkit-text-stroke:0.3px #f2f2f2;">Pos #B</div><div class="t" style="left:224.90px;top:220.05px;font-size:12.5px;font-weight:normal;font-style:normal;color:#f2f2f2;transform:scaleX(0.84);transform-origin:left;-webkit-text-stroke:0.3px #f2f2f2;">64.8</div><div class="t" style="left:275.10px;top:220.05px;font-size:12.5px;font-weight:normal;font-style:normal;color:#f2f2f2;transform:scaleX(0.84);transform-origin:left;-webkit-text-stroke:0.3px #f2f2f2;">64.6</div><div class="t" style="left:304.10px;top:220.05px;font-size:12.5px;font-weight:normal;font-style:normal;color:#f2f2f2;transform:scaleX(0.84);transform-origin:left;-webkit-text-stroke:0.3px #f2f2f2;">64.1</div><div class="t" style="left:333.10px;top:220.05px;font-size:12.5px;font-weight:normal;font-style:normal;color:#f2f2f2;transform:scaleX(0.84);transform-origin:left;-webkit-text-stroke:0.3px #f2f2f2;">68.1</div><div class="t" style="left:362.10px;top:220.05px;font-size:12.5px;font-weight:normal;font-style:normal;color:#f2f2f2;transform:scaleX(0.84);transform-origin:left;-webkit-text-stroke:0.3px #f2f2f2;">70.6</div><div class="t" style="left:391.10px;top:220.05px;font-size:12.5px;font-weight:normal;font-style:normal;color:#f2f2f2;transform:scaleX(0.84);transform-origin:left;-webkit-text-stroke:0.3px #f2f2f2;">79.3</div><div class="t" style="left:420.10px;top:220.05px;font-size:12.5px;font-weight:normal;font-style:normal;color:#f2f2f2;transform:scaleX(0.84);transform-origin:left;-webkit-text-stroke:0.3px #f2f2f2;">68.8</div><div class="t" style="left:450.10px;top:220.05px;font-size:12.5px;font-weight:normal;font-style:normal;color:#f2f2f2;transform:scaleX(0.84);transform-origin:left;-webkit-text-stroke:0.3px #f2f2f2;">64.4</div><div class="t" style="left:479.10px;top:220.05px;font-size:12.5px;font-weight:normal;font-style:normal;color:#f2f2f2;transform:scaleX(0.84);transform-origin:left;-webkit-text-stroke:0.3px #f2f2f2;">56.9</div><div class="t" style="left:508.10px;top:220.05px;font-size:12.5px;font-weight:normal;font-style:normal;color:#f2f2f2;transform:scaleX(0.84);transform-origin:left;-webkit-text-stroke:0.3px #f2f2f2;">48.2</div><div class="t" style="left:537.10px;top:220.05px;font-size:12.5px;font-weight:normal;font-style:normal;color:#f2f2f2;transform:scaleX(0.84);transform-origin:left;-webkit-text-stroke:0.3px #f2f2f2;">50.1</div><div class="t" style="left:566.10px;top:220.05px;font-size:12.5px;font-weight:normal;font-style:normal;color:#f2f2f2;transform:scaleX(0.84);transform-origin:left;-webkit-text-stroke:0.3px #f2f2f2;">43.2</div><div class="t" style="left:595.10px;top:220.05px;font-size:12.5px;font-weight:normal;font-style:normal;color:#f2f2f2;transform:scaleX(0.84);transform-origin:left;-webkit-text-stroke:0.3px #f2f2f2;">40.0</div><div class="t" style="left:624.10px;top:220.05px;font-size:12.5px;font-weight:normal;font-style:normal;color:#f2f2f2;transform:scaleX(0.84);transform-origin:left;-webkit-text-stroke:0.3px #f2f2f2;">37.5</div><div class="t" style="left:653.10px;top:220.05px;font-size:12.5px;font-weight:normal;font-style:normal;color:#f2f2f2;transform:scaleX(0.84);transform-origin:left;-webkit-text-stroke:0.3px #f2f2f2;">33.0</div><div class="t" style="left:682.10px;top:220.05px;font-size:12.5px;font-weight:normal;font-style:normal;color:#f2f2f2;transform:scaleX(0.84);transform-origin:left;-webkit-text-stroke:0.3px #f2f2f2;">30.8</div><div class="t" style="left:711.10px;top:220.05px;font-size:12.5px;font-weight:normal;font-style:normal;color:#f2f2f2;transform:scaleX(0.84);transform-origin:left;-webkit-text-stroke:0.3px #f2f2f2;">32.7</div><div class="t" style="left:740.10px;top:220.05px;font-size:12.5px;font-weight:normal;font-style:normal;color:#f2f2f2;transform:scaleX(0.84);transform-origin:left;-webkit-text-stroke:0.3px #f2f2f2;">28.6</div><div class="t" style="left:769.10px;top:220.05px;font-size:12.5px;font-weight:normal;font-style:normal;color:#f2f2f2;transform:scaleX(0.84);transform-origin:left;-webkit-text-stroke:0.3px #f2f2f2;">29.5</div><div class="t" style="left:799.10px;top:220.05px;font-size:12.5px;font-weight:normal;font-style:normal;color:#f2f2f2;transform:scaleX(0.84);transform-origin:left;-webkit-text-stroke:0.3px #f2f2f2;">31.0</div><div class="t" style="left:828.10px;top:220.05px;font-size:12.5px;font-weight:normal;font-style:normal;color:#f2f2f2;transform:scaleX(0.84);transform-origin:left;-webkit-text-stroke:0.3px #f2f2f2;">33.9</div><div class="t" style="left:857.10px;top:220.05px;font-size:12.5px;font-weight:normal;font-style:normal;color:#f2f2f2;transform:scaleX(0.84);transform-origin:left;-webkit-text-stroke:0.3px #f2f2f2;">35.3</div><svg style="position:absolute;left:0;top:0;overflow:visible" width="1" height="1"><g transform="translate(-13,-387)"><circle cx="200.4" cy="614.2" r="8.5" fill="none" stroke="#fff" stroke-width="1.9"/><ellipse cx="197.4" cy="610.8" rx="0.9" ry="1.2" fill="#fff"/><ellipse cx="203.4" cy="610.8" rx="0.9" ry="1.2" fill="#fff"/><path d="M195.9 619.0 Q200.4 616.0 204.9 619.0" fill="none" stroke="#fff" stroke-width="1"/></g></svg><div style="position:absolute;left:203.00px;top:221.10px;width:14.00px;height:13.70px;background:#ececec;"></div><svg style="position:absolute;left:203px;top:221.10px" width="14" height="14"><path d="M3 7.5 L5.8 10.3 L11.2 4.2" fill="none" stroke="#8c8c8c" stroke-width="1.7"/></svg><div class="t" style="left:-92.70px;width:200px;text-align:center;top:242.54px;font-size:11px;font-weight:normal;font-style:normal;color:#f2f2f2;">+</div><div class="t" style="left:33.50px;top:240.31px;font-size:12.2px;font-weight:normal;font-style:italic;color:#f2f2f2;transform:scaleX(0.92);transform-origin:left;-webkit-text-stroke:0.3px #f2f2f2;">#1</div><div class="t" style="right:836.80px;top:240.31px;font-size:12.2px;font-weight:normal;font-style:italic;color:#f2f2f2;transform:scaleX(0.86);transform-origin:right;-webkit-text-stroke:0.3px #f2f2f2;">16:57:30</div><div class="t" style="left:224.90px;top:240.05px;font-size:12.5px;font-weight:normal;font-style:italic;color:#f2f2f2;transform:scaleX(0.84);transform-origin:left;-webkit-text-stroke:0.3px #f2f2f2;">64.8</div><div class="t" style="left:275.10px;top:240.05px;font-size:12.5px;font-weight:normal;font-style:italic;color:#f2f2f2;transform:scaleX(0.84);transform-origin:left;-webkit-text-stroke:0.3px #f2f2f2;">64.6</div><div class="t" style="left:304.10px;top:240.05px;font-size:12.5px;font-weight:normal;font-style:italic;color:#f2f2f2;transform:scaleX(0.84);transform-origin:left;-webkit-text-stroke:0.3px #f2f2f2;">64.1</div><div class="t" style="left:333.10px;top:240.05px;font-size:12.5px;font-weight:normal;font-style:italic;color:#f2f2f2;transform:scaleX(0.84);transform-origin:left;-webkit-text-stroke:0.3px #f2f2f2;">68.1</div><div class="t" style="left:362.10px;top:240.05px;font-size:12.5px;font-weight:normal;font-style:italic;color:#f2f2f2;transform:scaleX(0.84);transform-origin:left;-webkit-text-stroke:0.3px #f2f2f2;">70.6</div><div class="t" style="left:391.10px;top:240.05px;font-size:12.5px;font-weight:normal;font-style:italic;color:#f2f2f2;transform:scaleX(0.84);transform-origin:left;-webkit-text-stroke:0.3px #f2f2f2;">79.3</div><div class="t" style="left:420.10px;top:240.05px;font-size:12.5px;font-weight:normal;font-style:italic;color:#f2f2f2;transform:scaleX(0.84);transform-origin:left;-webkit-text-stroke:0.3px #f2f2f2;">68.8</div><div class="t" style="left:450.10px;top:240.05px;font-size:12.5px;font-weight:normal;font-style:italic;color:#f2f2f2;transform:scaleX(0.84);transform-origin:left;-webkit-text-stroke:0.3px #f2f2f2;">64.4</div><div class="t" style="left:479.10px;top:240.05px;font-size:12.5px;font-weight:normal;font-style:italic;color:#f2f2f2;transform:scaleX(0.84);transform-origin:left;-webkit-text-stroke:0.3px #f2f2f2;">56.9</div><div class="t" style="left:508.10px;top:240.05px;font-size:12.5px;font-weight:normal;font-style:italic;color:#f2f2f2;transform:scaleX(0.84);transform-origin:left;-webkit-text-stroke:0.3px #f2f2f2;">48.2</div><div class="t" style="left:537.10px;top:240.05px;font-size:12.5px;font-weight:normal;font-style:italic;color:#f2f2f2;transform:scaleX(0.84);transform-origin:left;-webkit-text-stroke:0.3px #f2f2f2;">50.1</div><div class="t" style="left:566.10px;top:240.05px;font-size:12.5px;font-weight:normal;font-style:italic;color:#f2f2f2;transform:scaleX(0.84);transform-origin:left;-webkit-text-stroke:0.3px #f2f2f2;">43.2</div><div class="t" style="left:595.10px;top:240.05px;font-size:12.5px;font-weight:normal;font-style:italic;color:#f2f2f2;transform:scaleX(0.84);transform-origin:left;-webkit-text-stroke:0.3px #f2f2f2;">40.0</div><div class="t" style="left:624.10px;top:240.05px;font-size:12.5px;font-weight:normal;font-style:italic;color:#f2f2f2;transform:scaleX(0.84);transform-origin:left;-webkit-text-stroke:0.3px #f2f2f2;">37.5</div><div class="t" style="left:653.10px;top:240.05px;font-size:12.5px;font-weight:normal;font-style:italic;color:#f2f2f2;transform:scaleX(0.84);transform-origin:left;-webkit-text-stroke:0.3px #f2f2f2;">33.0</div><div class="t" style="left:682.10px;top:240.05px;font-size:12.5px;font-weight:normal;font-style:italic;color:#f2f2f2;transform:scaleX(0.84);transform-origin:left;-webkit-text-stroke:0.3px #f2f2f2;">30.8</div><div class="t" style="left:711.10px;top:240.05px;font-size:12.5px;font-weight:normal;font-style:italic;color:#f2f2f2;transform:scaleX(0.84);transform-origin:left;-webkit-text-stroke:0.3px #f2f2f2;">32.7</div><div class="t" style="left:740.10px;top:240.05px;font-size:12.5px;font-weight:normal;font-style:italic;color:#f2f2f2;transform:scaleX(0.84);transform-origin:left;-webkit-text-stroke:0.3px #f2f2f2;">28.6</div><div class="t" style="left:769.10px;top:240.05px;font-size:12.5px;font-weight:normal;font-style:italic;color:#f2f2f2;transform:scaleX(0.84);transform-origin:left;-webkit-text-stroke:0.3px #f2f2f2;">29.5</div><div class="t" style="left:799.10px;top:240.05px;font-size:12.5px;font-weight:normal;font-style:italic;color:#f2f2f2;transform:scaleX(0.84);transform-origin:left;-webkit-text-stroke:0.3px #f2f2f2;">31.0</div><div class="t" style="left:828.10px;top:240.05px;font-size:12.5px;font-weight:normal;font-style:italic;color:#f2f2f2;transform:scaleX(0.84);transform-origin:left;-webkit-text-stroke:0.3px #f2f2f2;">33.9</div><div class="t" style="left:857.10px;top:240.05px;font-size:12.5px;font-weight:normal;font-style:italic;color:#f2f2f2;transform:scaleX(0.84);transform-origin:left;-webkit-text-stroke:0.3px #f2f2f2;">35.3</div><svg style="position:absolute;left:0;top:0;overflow:visible" width="1" height="1"><g transform="translate(-13,-387)"><circle cx="200.4" cy="634.2" r="8.5" fill="none" stroke="#fff" stroke-width="1.9"/><ellipse cx="197.4" cy="630.8" rx="0.9" ry="1.2" fill="#fff"/><ellipse cx="203.4" cy="630.8" rx="0.9" ry="1.2" fill="#fff"/><path d="M195.9 639.0 Q200.4 636.0 204.9 639.0" fill="none" stroke="#fff" stroke-width="1"/></g></svg><div style="position:absolute;left:203.00px;top:241.10px;width:14.00px;height:13.70px;background:#ececec;"></div><svg style="position:absolute;left:203px;top:241.10px" width="14" height="14"><path d="M3 7.5 L5.8 10.3 L11.2 4.2" fill="none" stroke="#8c8c8c" stroke-width="1.7"/></svg><div class="t" style="left:-92.70px;width:200px;text-align:center;top:261.74px;font-size:11px;font-weight:normal;font-style:normal;color:#f2f2f2;">-</div><div class="t" style="left:14.90px;top:260.31px;font-size:12.2px;font-weight:bold;font-style:normal;color:#f2f2f2;transform:scaleX(0.925);transform-origin:left;">Background noise</div><div class="t" style="left:224.90px;top:260.05px;font-size:12.5px;font-weight:bold;font-style:normal;color:#f2f2f2;transform:scaleX(0.98);transform-origin:left;">53.7</div><div class="t" style="left:275.10px;top:260.05px;font-size:12.5px;font-weight:bold;font-style:normal;color:#f2f2f2;transform:scaleX(0.98);transform-origin:left;">37.5</div><div class="t" style="left:304.10px;top:260.05px;font-size:12.5px;font-weight:bold;font-style:normal;color:#f2f2f2;transform:scaleX(0.98);transform-origin:left;">39.8</div><div class="t" style="left:333.10px;top:260.05px;font-size:12.5px;font-weight:bold;font-style:normal;color:#f2f2f2;transform:scaleX(0.98);transform-origin:left;">45.4</div><div class="t" style="left:362.10px;top:260.05px;font-size:12.5px;font-weight:bold;font-style:normal;color:#f2f2f2;transform:scaleX(0.98);transform-origin:left;">42.7</div><div class="t" style="left:391.10px;top:260.05px;font-size:12.5px;font-weight:bold;font-style:normal;color:#f2f2f2;transform:scaleX(0.98);transform-origin:left;">49.6</div><div class="t" style="left:420.10px;top:260.05px;font-size:12.5px;font-weight:bold;font-style:normal;color:#f2f2f2;transform:scaleX(0.98);transform-origin:left;">49.4</div><div class="t" style="left:450.10px;top:260.05px;font-size:12.5px;font-weight:bold;font-style:normal;color:#f2f2f2;transform:scaleX(0.98);transform-origin:left;">44.5</div><div class="t" style="left:479.10px;top:260.05px;font-size:12.5px;font-weight:bold;font-style:normal;color:#f2f2f2;transform:scaleX(0.98);transform-origin:left;">50.3</div><div class="t" style="left:508.10px;top:260.05px;font-size:12.5px;font-weight:bold;font-style:normal;color:#f2f2f2;transform:scaleX(0.98);transform-origin:left;">45.4</div><div class="t" style="left:537.10px;top:260.05px;font-size:12.5px;font-weight:bold;font-style:normal;color:#f2f2f2;transform:scaleX(0.98);transform-origin:left;">52.9</div><div class="t" style="left:566.10px;top:260.05px;font-size:12.5px;font-weight:bold;font-style:normal;color:#f2f2f2;transform:scaleX(0.98);transform-origin:left;">50.2</div><div class="t" style="left:595.10px;top:260.05px;font-size:12.5px;font-weight:bold;font-style:normal;color:#f2f2f2;transform:scaleX(0.98);transform-origin:left;">40.1</div><div class="t" style="left:624.10px;top:260.05px;font-size:12.5px;font-weight:bold;font-style:normal;color:#f2f2f2;transform:scaleX(0.98);transform-origin:left;">39.2</div><div class="t" style="left:653.10px;top:260.05px;font-size:12.5px;font-weight:bold;font-style:normal;color:#f2f2f2;transform:scaleX(0.98);transform-origin:left;">36.0</div><div class="t" style="left:682.10px;top:260.05px;font-size:12.5px;font-weight:bold;font-style:normal;color:#f2f2f2;transform:scaleX(0.98);transform-origin:left;">40.8</div><div class="t" style="left:711.10px;top:260.05px;font-size:12.5px;font-weight:bold;font-style:normal;color:#f2f2f2;transform:scaleX(0.98);transform-origin:left;">39.4</div><div class="t" style="left:740.10px;top:260.05px;font-size:12.5px;font-weight:bold;font-style:normal;color:#f2f2f2;transform:scaleX(0.98);transform-origin:left;">38.0</div><div class="t" style="left:769.10px;top:260.05px;font-size:12.5px;font-weight:bold;font-style:normal;color:#f2f2f2;transform:scaleX(0.98);transform-origin:left;">37.0</div><div class="t" style="left:799.10px;top:260.05px;font-size:12.5px;font-weight:bold;font-style:normal;color:#f2f2f2;transform:scaleX(0.98);transform-origin:left;">40.1</div><div class="t" style="left:828.10px;top:260.05px;font-size:12.5px;font-weight:bold;font-style:normal;color:#f2f2f2;transform:scaleX(0.98);transform-origin:left;">39.5</div><div class="t" style="left:857.10px;top:260.05px;font-size:12.5px;font-weight:bold;font-style:normal;color:#f2f2f2;transform:scaleX(0.98);transform-origin:left;">36.7</div><div class="t" style="left:886.10px;top:260.05px;font-size:12.5px;font-weight:bold;font-style:normal;color:#f2f2f2;transform:scaleX(0.98);transform-origin:left;">54.3</div><div class="t" style="left:915.10px;top:260.05px;font-size:12.5px;font-weight:bold;font-style:normal;color:#f2f2f2;transform:scaleX(0.98);transform-origin:left;">64.3</div><div class="t" style="left:944.10px;top:260.05px;font-size:12.5px;font-weight:bold;font-style:normal;color:#f2f2f2;transform:scaleX(0.98);transform-origin:left;">75.9</div><svg style="position:absolute;left:0;top:0;overflow:visible" width="1" height="1"><g transform="translate(-13,-387)"><circle cx="200.4" cy="654.2" r="8.5" fill="none" stroke="#fff" stroke-width="1.9"/><ellipse cx="197.4" cy="650.8" rx="0.9" ry="1.2" fill="#fff"/><ellipse cx="203.4" cy="650.8" rx="0.9" ry="1.2" fill="#fff"/><path d="M194.1 655.5 Q200.4 664.0 206.7 655.5 Q200.4 658.8 194.1 655.5 Z" fill="#fff" stroke="#fff" stroke-width="0.9" stroke-linejoin="round"/></g></svg><div class="t" style="left:-92.70px;width:200px;text-align:center;top:282.54px;font-size:11px;font-weight:normal;font-style:normal;color:#f2f2f2;">+</div><div class="t" style="left:33.50px;top:280.31px;font-size:12.2px;font-weight:normal;font-style:italic;color:#f2f2f2;transform:scaleX(0.92);transform-origin:left;-webkit-text-stroke:0.3px #f2f2f2;">#1</div><div class="t" style="right:836.80px;top:280.31px;font-size:12.2px;font-weight:normal;font-style:italic;color:#f2f2f2;transform:scaleX(0.86);transform-origin:right;-webkit-text-stroke:0.3px #f2f2f2;">16:45:33</div><div class="t" style="left:224.90px;top:280.05px;font-size:12.5px;font-weight:normal;font-style:italic;color:#f2f2f2;transform:scaleX(0.84);transform-origin:left;-webkit-text-stroke:0.3px #f2f2f2;">37.2</div><div class="t" style="left:275.10px;top:280.05px;font-size:12.5px;font-weight:normal;font-style:italic;color:#f2f2f2;transform:scaleX(0.84);transform-origin:left;-webkit-text-stroke:0.3px #f2f2f2;">32.0</div><div class="t" style="left:304.10px;top:280.05px;font-size:12.5px;font-weight:normal;font-style:italic;color:#f2f2f2;transform:scaleX(0.84);transform-origin:left;-webkit-text-stroke:0.3px #f2f2f2;">32.5</div><div class="t" style="left:333.10px;top:280.05px;font-size:12.5px;font-weight:normal;font-style:italic;color:#f2f2f2;transform:scaleX(0.84);transform-origin:left;-webkit-text-stroke:0.3px #f2f2f2;">35.9</div><div class="t" style="left:362.10px;top:280.05px;font-size:12.5px;font-weight:normal;font-style:italic;color:#f2f2f2;transform:scaleX(0.84);transform-origin:left;-webkit-text-stroke:0.3px #f2f2f2;">42.2</div><div class="t" style="left:391.10px;top:280.05px;font-size:12.5px;font-weight:normal;font-style:italic;color:#f2f2f2;transform:scaleX(0.84);transform-origin:left;-webkit-text-stroke:0.3px #f2f2f2;">50.2</div><div class="t" style="left:420.10px;top:280.05px;font-size:12.5px;font-weight:normal;font-style:italic;color:#f2f2f2;transform:scaleX(0.84);transform-origin:left;-webkit-text-stroke:0.3px #f2f2f2;">44.1</div><div class="t" style="left:450.10px;top:280.05px;font-size:12.5px;font-weight:normal;font-style:italic;color:#f2f2f2;transform:scaleX(0.84);transform-origin:left;-webkit-text-stroke:0.3px #f2f2f2;">41.6</div><div class="t" style="left:479.10px;top:280.05px;font-size:12.5px;font-weight:normal;font-style:italic;color:#f2f2f2;transform:scaleX(0.84);transform-origin:left;-webkit-text-stroke:0.3px #f2f2f2;">22.5</div><div class="t" style="left:508.10px;top:280.05px;font-size:12.5px;font-weight:normal;font-style:italic;color:#f2f2f2;transform:scaleX(0.84);transform-origin:left;-webkit-text-stroke:0.3px #f2f2f2;">18.1</div><div class="t" style="left:537.10px;top:280.05px;font-size:12.5px;font-weight:normal;font-style:italic;color:#f2f2f2;transform:scaleX(0.84);transform-origin:left;-webkit-text-stroke:0.3px #f2f2f2;">12.2</div><div class="t" style="left:566.10px;top:280.05px;font-size:12.5px;font-weight:normal;font-style:italic;color:#f2f2f2;transform:scaleX(0.84);transform-origin:left;-webkit-text-stroke:0.3px #f2f2f2;">14.2</div><div class="t" style="left:595.10px;top:280.05px;font-size:12.5px;font-weight:normal;font-style:italic;color:#f2f2f2;transform:scaleX(0.84);transform-origin:left;-webkit-text-stroke:0.3px #f2f2f2;">9.7</div><div class="t" style="left:624.10px;top:280.05px;font-size:12.5px;font-weight:normal;font-style:italic;color:#f2f2f2;transform:scaleX(0.84);transform-origin:left;-webkit-text-stroke:0.3px #f2f2f2;">8.1</div><div class="t" style="left:653.10px;top:280.05px;font-size:12.5px;font-weight:normal;font-style:italic;color:#f2f2f2;transform:scaleX(0.84);transform-origin:left;-webkit-text-stroke:0.3px #f2f2f2;">8.0</div><div class="t" style="left:682.10px;top:280.05px;font-size:12.5px;font-weight:normal;font-style:italic;color:#f2f2f2;transform:scaleX(0.84);transform-origin:left;-webkit-text-stroke:0.3px #f2f2f2;">10.0</div><div class="t" style="left:711.10px;top:280.05px;font-size:12.5px;font-weight:normal;font-style:italic;color:#f2f2f2;transform:scaleX(0.84);transform-origin:left;-webkit-text-stroke:0.3px #f2f2f2;">8.9</div><div class="t" style="left:740.10px;top:280.05px;font-size:12.5px;font-weight:normal;font-style:italic;color:#f2f2f2;transform:scaleX(0.84);transform-origin:left;-webkit-text-stroke:0.3px #f2f2f2;">7.5</div><div class="t" style="left:769.10px;top:280.05px;font-size:12.5px;font-weight:normal;font-style:italic;color:#f2f2f2;transform:scaleX(0.84);transform-origin:left;-webkit-text-stroke:0.3px #f2f2f2;">7.7</div><div class="t" style="left:799.10px;top:280.05px;font-size:12.5px;font-weight:normal;font-style:italic;color:#f2f2f2;transform:scaleX(0.84);transform-origin:left;-webkit-text-stroke:0.3px #f2f2f2;">8.7</div><div class="t" style="left:828.10px;top:280.05px;font-size:12.5px;font-weight:normal;font-style:italic;color:#f2f2f2;transform:scaleX(0.84);transform-origin:left;-webkit-text-stroke:0.3px #f2f2f2;">10.0</div><div class="t" style="left:857.10px;top:280.05px;font-size:12.5px;font-weight:normal;font-style:italic;color:#f2f2f2;transform:scaleX(0.84);transform-origin:left;-webkit-text-stroke:0.3px #f2f2f2;">12.0</div><svg style="position:absolute;left:0;top:0;overflow:visible" width="1" height="1"><g transform="translate(-13,-387)"><circle cx="200.4" cy="674.2" r="8.5" fill="none" stroke="#fff" stroke-width="1.9"/><ellipse cx="197.4" cy="670.8" rx="0.9" ry="1.2" fill="#fff"/><ellipse cx="203.4" cy="670.8" rx="0.9" ry="1.2" fill="#fff"/><path d="M194.1 675.5 Q200.4 684.0 206.7 675.5 Q200.4 678.8 194.1 675.5 Z" fill="#fff" stroke="#fff" stroke-width="0.9" stroke-linejoin="round"/></g></svg><div style="position:absolute;left:203.00px;top:281.10px;width:14.00px;height:13.70px;background:#ececec;"></div><svg style="position:absolute;left:203px;top:281.10px" width="14" height="14"><path d="M3 7.5 L5.8 10.3 L11.2 4.2" fill="none" stroke="#8c8c8c" stroke-width="1.7"/></svg><div class="t" style="left:-92.70px;width:200px;text-align:center;top:302.54px;font-size:11px;font-weight:normal;font-style:normal;color:#f2f2f2;">+</div><div class="t" style="left:33.50px;top:300.31px;font-size:12.2px;font-weight:normal;font-style:italic;color:#f2f2f2;transform:scaleX(0.92);transform-origin:left;-webkit-text-stroke:0.3px #f2f2f2;">#2</div><div class="t" style="right:836.80px;top:300.31px;font-size:12.2px;font-weight:normal;font-style:italic;color:#f2f2f2;transform:scaleX(0.86);transform-origin:right;-webkit-text-stroke:0.3px #f2f2f2;">10:31:07</div><div class="t" style="left:224.90px;top:300.05px;font-size:12.5px;font-weight:normal;font-style:italic;color:#f2f2f2;transform:scaleX(0.84);transform-origin:left;-webkit-text-stroke:0.3px #f2f2f2;">42.3</div><div class="t" style="left:275.10px;top:300.05px;font-size:12.5px;font-weight:normal;font-style:italic;color:#f2f2f2;transform:scaleX(0.84);transform-origin:left;-webkit-text-stroke:0.3px #f2f2f2;">38.5</div><div class="t" style="left:304.10px;top:300.05px;font-size:12.5px;font-weight:normal;font-style:italic;color:#f2f2f2;transform:scaleX(0.84);transform-origin:left;-webkit-text-stroke:0.3px #f2f2f2;">42.3</div><div class="t" style="left:333.10px;top:300.05px;font-size:12.5px;font-weight:normal;font-style:italic;color:#f2f2f2;transform:scaleX(0.84);transform-origin:left;-webkit-text-stroke:0.3px #f2f2f2;">48.7</div><div class="t" style="left:362.10px;top:300.05px;font-size:12.5px;font-weight:normal;font-style:italic;color:#f2f2f2;transform:scaleX(0.84);transform-origin:left;-webkit-text-stroke:0.3px #f2f2f2;">45.0</div><div class="t" style="left:391.10px;top:300.05px;font-size:12.5px;font-weight:normal;font-style:italic;color:#f2f2f2;transform:scaleX(0.84);transform-origin:left;-webkit-text-stroke:0.3px #f2f2f2;">49.9</div><div class="t" style="left:420.10px;top:300.05px;font-size:12.5px;font-weight:normal;font-style:italic;color:#f2f2f2;transform:scaleX(0.84);transform-origin:left;-webkit-text-stroke:0.3px #f2f2f2;">52.7</div><div class="t" style="left:450.10px;top:300.05px;font-size:12.5px;font-weight:normal;font-style:italic;color:#f2f2f2;transform:scaleX(0.84);transform-origin:left;-webkit-text-stroke:0.3px #f2f2f2;">46.1</div><div class="t" style="left:479.10px;top:300.05px;font-size:12.5px;font-weight:normal;font-style:italic;color:#f2f2f2;transform:scaleX(0.84);transform-origin:left;-webkit-text-stroke:0.3px #f2f2f2;">30.7</div><div class="t" style="left:508.10px;top:300.05px;font-size:12.5px;font-weight:normal;font-style:italic;color:#f2f2f2;transform:scaleX(0.84);transform-origin:left;-webkit-text-stroke:0.3px #f2f2f2;">27.6</div><div class="t" style="left:537.10px;top:300.05px;font-size:12.5px;font-weight:normal;font-style:italic;color:#f2f2f2;transform:scaleX(0.84);transform-origin:left;-webkit-text-stroke:0.3px #f2f2f2;">25.9</div><div class="t" style="left:566.10px;top:300.05px;font-size:12.5px;font-weight:normal;font-style:italic;color:#f2f2f2;transform:scaleX(0.84);transform-origin:left;-webkit-text-stroke:0.3px #f2f2f2;">25.3</div><div class="t" style="left:595.10px;top:300.05px;font-size:12.5px;font-weight:normal;font-style:italic;color:#f2f2f2;transform:scaleX(0.84);transform-origin:left;-webkit-text-stroke:0.3px #f2f2f2;">23.8</div><div class="t" style="left:624.10px;top:300.05px;font-size:12.5px;font-weight:normal;font-style:italic;color:#f2f2f2;transform:scaleX(0.84);transform-origin:left;-webkit-text-stroke:0.3px #f2f2f2;">26.1</div><div class="t" style="left:653.10px;top:300.05px;font-size:12.5px;font-weight:normal;font-style:italic;color:#f2f2f2;transform:scaleX(0.84);transform-origin:left;-webkit-text-stroke:0.3px #f2f2f2;">24.9</div><div class="t" style="left:682.10px;top:300.05px;font-size:12.5px;font-weight:normal;font-style:italic;color:#f2f2f2;transform:scaleX(0.84);transform-origin:left;-webkit-text-stroke:0.3px #f2f2f2;">24.0</div><div class="t" style="left:711.10px;top:300.05px;font-size:12.5px;font-weight:normal;font-style:italic;color:#f2f2f2;transform:scaleX(0.84);transform-origin:left;-webkit-text-stroke:0.3px #f2f2f2;">25.8</div><div class="t" style="left:740.10px;top:300.05px;font-size:12.5px;font-weight:normal;font-style:italic;color:#f2f2f2;transform:scaleX(0.84);transform-origin:left;-webkit-text-stroke:0.3px #f2f2f2;">25.0</div><div class="t" style="left:769.10px;top:300.05px;font-size:12.5px;font-weight:normal;font-style:italic;color:#f2f2f2;transform:scaleX(0.84);transform-origin:left;-webkit-text-stroke:0.3px #f2f2f2;">25.9</div><div class="t" style="left:799.10px;top:300.05px;font-size:12.5px;font-weight:normal;font-style:italic;color:#f2f2f2;transform:scaleX(0.84);transform-origin:left;-webkit-text-stroke:0.3px #f2f2f2;">24.9</div><div class="t" style="left:828.10px;top:300.05px;font-size:12.5px;font-weight:normal;font-style:italic;color:#f2f2f2;transform:scaleX(0.84);transform-origin:left;-webkit-text-stroke:0.3px #f2f2f2;">25.1</div><div class="t" style="left:857.10px;top:300.05px;font-size:12.5px;font-weight:normal;font-style:italic;color:#f2f2f2;transform:scaleX(0.84);transform-origin:left;-webkit-text-stroke:0.3px #f2f2f2;">24.1</div><div class="t" style="left:886.10px;top:300.05px;font-size:12.5px;font-weight:normal;font-style:italic;color:#f2f2f2;transform:scaleX(0.84);transform-origin:left;-webkit-text-stroke:0.3px #f2f2f2;">43.4</div><div class="t" style="left:915.10px;top:300.05px;font-size:12.5px;font-weight:normal;font-style:italic;color:#f2f2f2;transform:scaleX(0.84);transform-origin:left;-webkit-text-stroke:0.3px #f2f2f2;">65.3</div><div class="t" style="left:944.10px;top:300.05px;font-size:12.5px;font-weight:normal;font-style:italic;color:#f2f2f2;transform:scaleX(0.84);transform-origin:left;-webkit-text-stroke:0.3px #f2f2f2;">79.6</div><svg style="position:absolute;left:0;top:0;overflow:visible" width="1" height="1"><g transform="translate(-13,-387)"><circle cx="200.4" cy="694.2" r="8.5" fill="none" stroke="#fff" stroke-width="1.9"/><ellipse cx="197.4" cy="690.8" rx="0.9" ry="1.2" fill="#fff"/><ellipse cx="203.4" cy="690.8" rx="0.9" ry="1.2" fill="#fff"/><path d="M194.1 695.5 Q200.4 704.0 206.7 695.5 Q200.4 698.8 194.1 695.5 Z" fill="#fff" stroke="#fff" stroke-width="0.9" stroke-linejoin="round"/></g></svg><div style="position:absolute;left:203.00px;top:301.10px;width:14.00px;height:13.70px;background:#ececec;"></div><svg style="position:absolute;left:203px;top:301.10px" width="14" height="14"><path d="M3 7.5 L5.8 10.3 L11.2 4.2" fill="none" stroke="#8c8c8c" stroke-width="1.7"/></svg><div style="position:absolute;left:1.00px;top:37.00px;width:970.00px;height:1.00px;background:#000;"></div><div style="position:absolute;left:1.00px;top:57.00px;width:970.00px;height:1.00px;background:#000;"></div><div style="position:absolute;left:1.00px;top:77.00px;width:970.00px;height:1.00px;background:#000;"></div><div style="position:absolute;left:1.00px;top:97.00px;width:970.00px;height:1.00px;background:#000;"></div><div style="position:absolute;left:1.00px;top:117.00px;width:970.00px;height:1.00px;background:#000;"></div><div style="position:absolute;left:1.00px;top:137.00px;width:970.00px;height:1.00px;background:#000;"></div><div style="position:absolute;left:1.00px;top:157.00px;width:970.00px;height:1.00px;background:#000;"></div><div style="position:absolute;left:1.00px;top:177.00px;width:970.00px;height:1.00px;background:#000;"></div><div style="position:absolute;left:1.00px;top:197.00px;width:970.00px;height:1.00px;background:#000;"></div><div style="position:absolute;left:1.00px;top:217.00px;width:970.00px;height:1.00px;background:#000;"></div><div style="position:absolute;left:1.00px;top:237.00px;width:970.00px;height:1.00px;background:#000;"></div><div style="position:absolute;left:1.00px;top:257.00px;width:970.00px;height:1.00px;background:#000;"></div><div style="position:absolute;left:1.00px;top:277.00px;width:970.00px;height:1.00px;background:#000;"></div><div style="position:absolute;left:1.00px;top:297.00px;width:970.00px;height:1.00px;background:#000;"></div><div style="position:absolute;left:1.00px;top:18.00px;width:1.00px;height:300.00px;background:#000;"></div><div style="position:absolute;left:12.00px;top:18.00px;width:1.00px;height:300.00px;background:#000;"></div><div style="position:absolute;left:177.00px;top:18.00px;width:1.00px;height:300.00px;background:#000;"></div><div style="position:absolute;left:197.00px;top:18.00px;width:1.00px;height:300.00px;background:#000;"></div><div style="position:absolute;left:222.00px;top:18.00px;width:1.00px;height:300.00px;background:#000;"></div><div style="position:absolute;left:272.00px;top:18.00px;width:1.00px;height:300.00px;background:#000;"></div><div style="position:absolute;left:301.00px;top:18.00px;width:1.00px;height:300.00px;background:#000;"></div><div style="position:absolute;left:330.00px;top:18.00px;width:1.00px;height:300.00px;background:#000;"></div><div style="position:absolute;left:359.00px;top:18.00px;width:1.00px;height:300.00px;background:#000;"></div><div style="position:absolute;left:388.00px;top:18.00px;width:1.00px;height:300.00px;background:#000;"></div><div style="position:absolute;left:417.00px;top:18.00px;width:1.00px;height:300.00px;background:#000;"></div><div style="position:absolute;left:447.00px;top:18.00px;width:1.00px;height:300.00px;background:#000;"></div><div style="position:absolute;left:476.00px;top:18.00px;width:1.00px;height:300.00px;background:#000;"></div><div style="position:absolute;left:505.00px;top:18.00px;width:1.00px;height:300.00px;background:#000;"></div><div style="position:absolute;left:534.00px;top:18.00px;width:1.00px;height:300.00px;background:#000;"></div><div style="position:absolute;left:563.00px;top:18.00px;width:1.00px;height:300.00px;background:#000;"></div><div style="position:absolute;left:592.00px;top:18.00px;width:1.00px;height:300.00px;background:#000;"></div><div style="position:absolute;left:621.00px;top:18.00px;width:1.00px;height:300.00px;background:#000;"></div><div style="position:absolute;left:650.00px;top:18.00px;width:1.00px;height:300.00px;background:#000;"></div><div style="position:absolute;left:679.00px;top:18.00px;width:1.00px;height:300.00px;background:#000;"></div><div style="position:absolute;left:708.00px;top:18.00px;width:1.00px;height:300.00px;background:#000;"></div><div style="position:absolute;left:737.00px;top:18.00px;width:1.00px;height:300.00px;background:#000;"></div><div style="position:absolute;left:766.00px;top:18.00px;width:1.00px;height:300.00px;background:#000;"></div><div style="position:absolute;left:796.00px;top:18.00px;width:1.00px;height:300.00px;background:#000;"></div><div style="position:absolute;left:825.00px;top:18.00px;width:1.00px;height:300.00px;background:#000;"></div><div style="position:absolute;left:854.00px;top:18.00px;width:1.00px;height:300.00px;background:#000;"></div><div style="position:absolute;left:883.00px;top:18.00px;width:1.00px;height:300.00px;background:#000;"></div><div style="position:absolute;left:912.00px;top:18.00px;width:1.00px;height:300.00px;background:#000;"></div><div style="position:absolute;left:941.00px;top:18.00px;width:1.00px;height:300.00px;background:#000;"></div><div style="position:absolute;left:970.00px;top:18.00px;width:1.00px;height:300.00px;background:#000;"></div><div style="position:absolute;left:971.30px;top:18.00px;width:18.20px;height:287.00px;background:#fafafa;"></div><div style="position:absolute;left:978.50px;top:35.00px;width:5.50px;height:103.00px;background:#cdcdcd;"></div><svg style="position:absolute;left:971px;top:18px" width="19" height="287" fill="none" stroke="#6a6a6a" stroke-width="1.2"><path d="M4 12 L9 7 L14 12"/><path d="M4 275 L9 280 L14 275"/></svg></div>
</body></html>
